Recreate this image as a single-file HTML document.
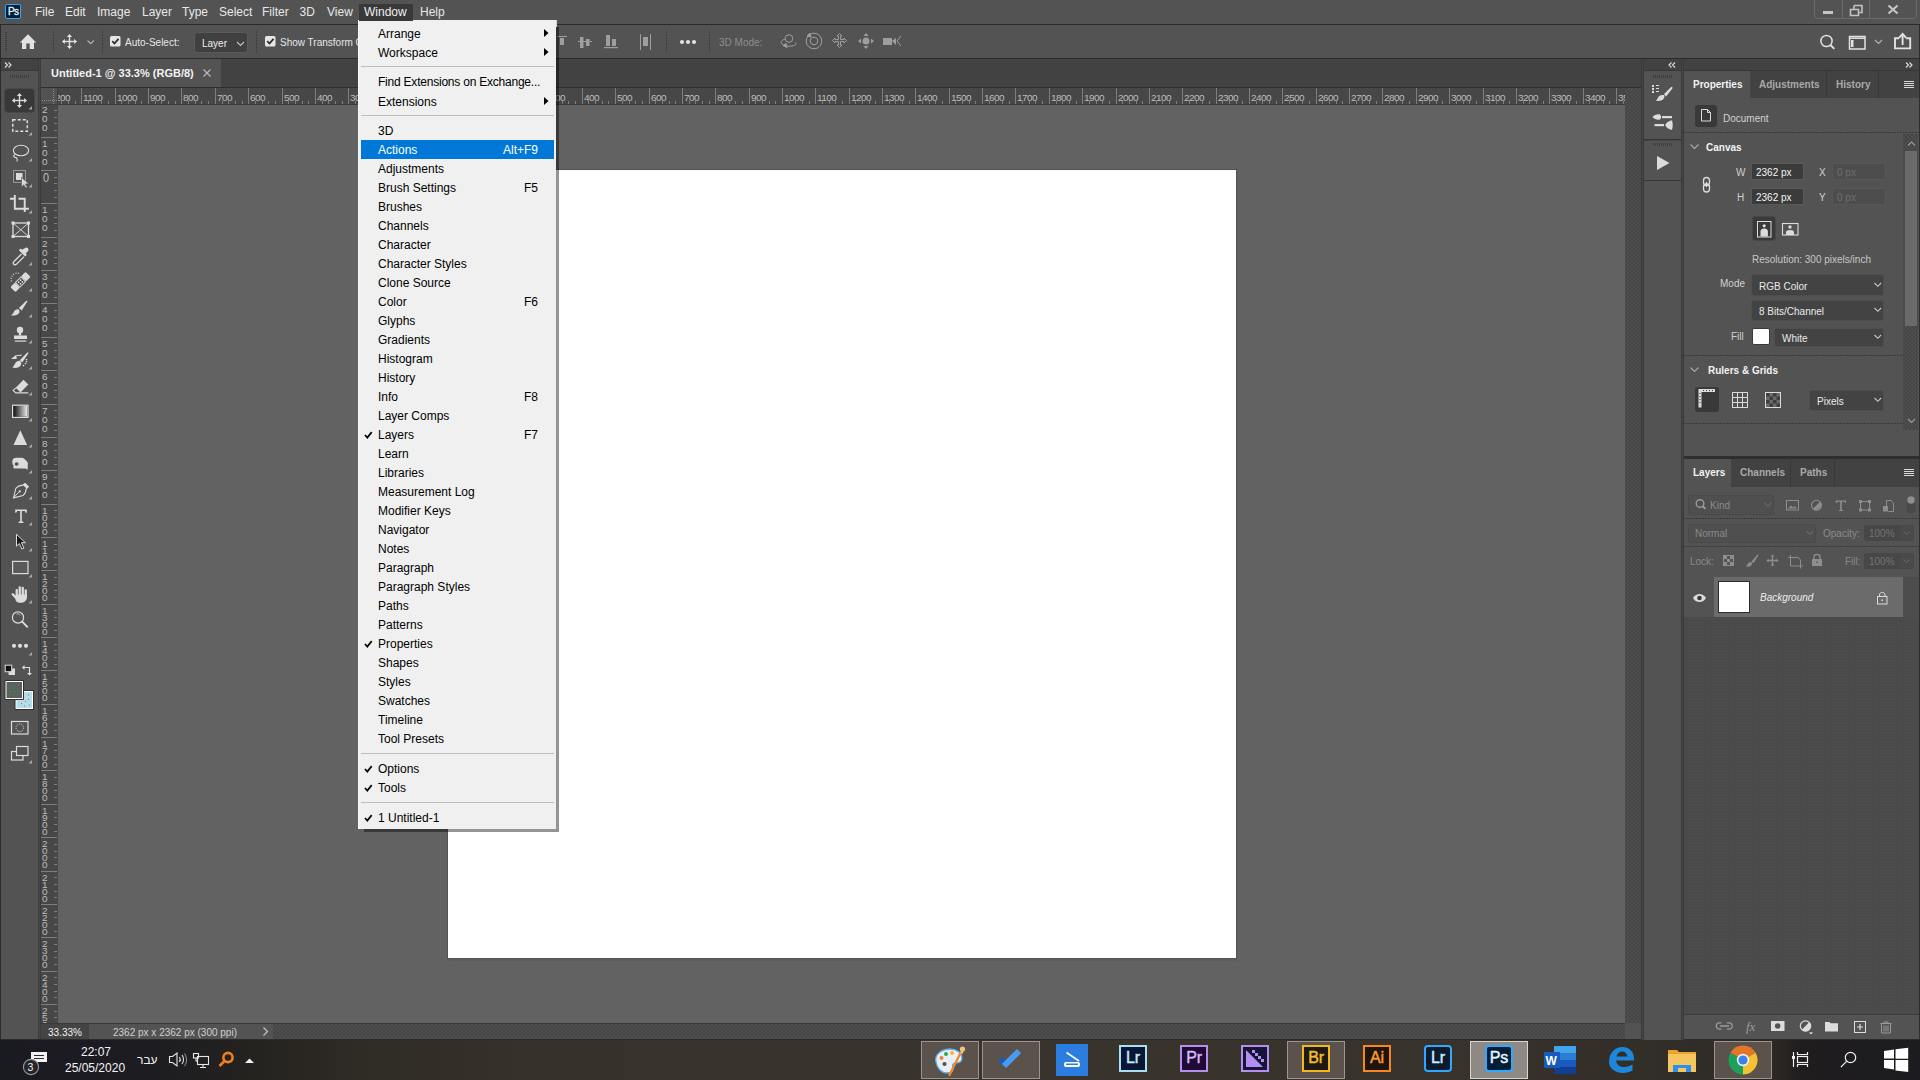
<!DOCTYPE html>
<html><head><meta charset="utf-8"><style>
html,body{margin:0;padding:0;}
body{width:1920px;height:1080px;overflow:hidden;position:relative;background:#535353;font-family:"Liberation Sans", sans-serif;}
div,svg{box-sizing:border-box;}
</style></head><body>
<div style="position:absolute;left:0px;top:0px;width:1920px;height:24px;background:#535353;"></div><div style="position:absolute;left:0px;top:24px;width:1920px;height:1px;background:#2b2b2b;"></div><div style="position:absolute;left:5px;top:4px;width:16px;height:15px;background:#001e36;border:1px solid #31a8ff;border-radius:2px;box-sizing:border-box"></div><div style="position:absolute;left:8px;top:7px;font-size:10px;line-height:10px;color:#e4f2ff;font-weight:normal;white-space:nowrap;letter-spacing:-0.6px;-webkit-text-stroke:0.35px #e4f2ff">Ps</div><div style="position:absolute;left:35px;top:6px;font-size:12px;line-height:12px;color:#e8e8e8;font-weight:normal;white-space:nowrap;">File</div><div style="position:absolute;left:65px;top:6px;font-size:12px;line-height:12px;color:#e8e8e8;font-weight:normal;white-space:nowrap;">Edit</div><div style="position:absolute;left:97px;top:6px;font-size:12px;line-height:12px;color:#e8e8e8;font-weight:normal;white-space:nowrap;">Image</div><div style="position:absolute;left:142px;top:6px;font-size:12px;line-height:12px;color:#e8e8e8;font-weight:normal;white-space:nowrap;">Layer</div><div style="position:absolute;left:182px;top:6px;font-size:12px;line-height:12px;color:#e8e8e8;font-weight:normal;white-space:nowrap;">Type</div><div style="position:absolute;left:219px;top:6px;font-size:12px;line-height:12px;color:#e8e8e8;font-weight:normal;white-space:nowrap;">Select</div><div style="position:absolute;left:262px;top:6px;font-size:12px;line-height:12px;color:#e8e8e8;font-weight:normal;white-space:nowrap;">Filter</div><div style="position:absolute;left:299.5px;top:6px;font-size:12px;line-height:12px;color:#e8e8e8;font-weight:normal;white-space:nowrap;">3D</div><div style="position:absolute;left:327px;top:6px;font-size:12px;line-height:12px;color:#e8e8e8;font-weight:normal;white-space:nowrap;">View</div><div style="position:absolute;left:420px;top:6px;font-size:12px;line-height:12px;color:#e8e8e8;font-weight:normal;white-space:nowrap;">Help</div><div style="position:absolute;left:359px;top:4px;width:54px;height:16px;background:#393939;"></div><div style="position:absolute;left:364px;top:6px;font-size:12px;line-height:12px;color:#f0f0f0;font-weight:normal;white-space:nowrap;">Window</div><div style="position:absolute;left:1814px;top:-3px;width:103px;height:22px;border:1px solid #6b6b6b;border-radius:4px"></div><div style="position:absolute;left:1842px;top:0px;width:1px;height:18px;background:#6b6b6b;"></div><div style="position:absolute;left:1869px;top:0px;width:1px;height:18px;background:#6b6b6b;"></div><svg style="position:absolute;left:1814px;top:0px;" width="106" height="20" viewBox="1814 0 106 20"><rect x="1823" y="11" width="10" height="3" fill="#c4c4c4"/><path d="M1854 5.5h8v7h-2.5M1850.5 9.5h8v6h-8z M1854 5.5v3.5" fill="none" stroke="#c4c4c4" stroke-width="1.6"/><path d="M1888.5 5.5l9 8M1897.5 5.5l-9 8" stroke="#c4c4c4" stroke-width="2.2"/></svg><div style="position:absolute;left:0px;top:25px;width:1920px;height:33px;background:#535353;"></div><div style="position:absolute;left:0px;top:25px;width:1px;height:33px;background:#2b2b2b;"></div><div style="position:absolute;left:1919px;top:25px;width:1px;height:33px;background:#2b2b2b;"></div><div style="position:absolute;left:0px;top:58px;width:1920px;height:1px;background:#2b2b2b;"></div><div style="position:absolute;left:5px;top:32px;width:2px;height:19px;background-image:repeating-linear-gradient(to bottom,#3c3c3c 0 1px,transparent 1px 2px)"></div><svg style="position:absolute;left:0px;top:25px;" width="560" height="33" viewBox="0 25 560 33"><path d="M28 34.3L19.8 42.6h2.2V49h4.3v-5.6h3.4V49H34v-6.4h2.2z" fill="#e2e2e2"/><g fill="#e2e2e2"><rect x="68.8" y="36.4" width="1.4" height="10.2"/><rect x="64.4" y="40.8" width="10.2" height="1.4"/><path d="M69.5 33.9l2.6 3.0h-5.2z M69.5 49.1l2.6 -3.0h-5.2z M61.9 41.5l3.0 2.6v-5.2z M77.1 41.5l-3.0 2.6v-5.2z"/></g><path d="M87.5 40.5l3.2 3.2 3.2-3.2" fill="none" stroke="#b4b4b4" stroke-width="1.1"/><rect x="110" y="36" width="10.5" height="10.5" rx="1.5" fill="#e6e6e6"/><path d="M112.3 41.2l2.2 2.3 4-4.6" fill="none" stroke="#2a2a2a" stroke-width="1.8"/><rect x="194.5" y="32.5" width="53" height="20" rx="3" fill="#404040" stroke="#5a5a5a"/><path d="M237 42l3.5 3.5 3.5-3.5" fill="none" stroke="#c4c4c4" stroke-width="1.1"/><rect x="265" y="36" width="10.5" height="10.5" rx="1.5" fill="#e6e6e6"/><path d="M267.3 41.2l2.2 2.3 4-4.6" fill="none" stroke="#2a2a2a" stroke-width="1.8"/></svg><div style="position:absolute;left:53px;top:31px;width:1px;height:22px;background-image:repeating-linear-gradient(to bottom,#3e3e3e 0 2px,transparent 2px 3px)"></div><div style="position:absolute;left:102px;top:31px;width:1px;height:22px;background-image:repeating-linear-gradient(to bottom,#3e3e3e 0 2px,transparent 2px 3px)"></div><div style="position:absolute;left:256px;top:31px;width:1px;height:22px;background-image:repeating-linear-gradient(to bottom,#3e3e3e 0 2px,transparent 2px 3px)"></div><div style="position:absolute;left:125px;top:38px;font-size:10px;line-height:10px;color:#e6e6e6;font-weight:normal;white-space:nowrap;">Auto-Select:</div><div style="position:absolute;left:202px;top:39px;font-size:10px;line-height:10px;color:#f0f0f0;font-weight:normal;white-space:nowrap;">Layer</div><div style="position:absolute;left:280px;top:38px;font-size:10px;line-height:10px;color:#e6e6e6;font-weight:normal;white-space:nowrap;">Show Transform Controls</div><svg style="position:absolute;left:556px;top:25px;" width="360" height="33" viewBox="556 25 360 33"><g fill="#9e9e9e"><rect x="557" y="36" width="10" height="1"/><rect x="560" y="38" width="4" height="7"/><rect x="578" y="41" width="14" height="1"/><rect x="580" y="37" width="3.5" height="11"/><rect x="586" y="39" width="3.5" height="7"/><rect x="604" y="47" width="14" height="1.2"/><rect x="606" y="35" width="4" height="11"/><rect x="612" y="39" width="4" height="7"/><rect x="640" y="34" width="1" height="16"/><rect x="650" y="34" width="1" height="16"/><rect x="643" y="37" width="5" height="9"/></g><g fill="#e2e2e2"><circle cx="682" cy="42" r="2.1"/><circle cx="688" cy="42" r="2.1"/><circle cx="694" cy="42" r="2.1"/></g><g fill="none" stroke="#9e9e9e" stroke-width="1"><circle cx="789" cy="38.5" r="3.8"/><path d="M785 39c-3 1-5 3-3 5 1.5 2 6 2.5 10 2 3-.5 5-1.5 3.5-3.5"/><path d="M783 45.5l4 2-1-4z" fill="#9e9e9e"/><circle cx="814" cy="41" r="7.8"/><circle cx="814" cy="41" r="3.8"/><path d="M807 36l3-3 1 4z" fill="#9e9e9e"/><path d="M839.5 33.5l-2.5 2.5h1.5v3.5h-3.5v-1.5l-2.5 2.5 2.5 2.5v-1.5h3.5v3.5h-1.5l2.5 2.5 2.5-2.5h-1.5v-3.5h3.5v1.5l2.5-2.5-2.5-2.5v1.5h-3.5v-3.5h1.5z"/></g><g fill="#9e9e9e"><circle cx="866" cy="41" r="3.5"/><path d="M866 33l-2.5 3h5zM866 49l-2.5-3h5zM858 41l3-2.5v5zM874 41l-3-2.5v5z"/><rect x="883" y="38" width="9" height="7"/><path d="M892 41l4-3v7z"/></g><path d="M901 36l-4 5 4 5" fill="none" stroke="#9e9e9e" stroke-width="1"/></svg><div style="position:absolute;left:666px;top:31px;width:1px;height:22px;background-image:repeating-linear-gradient(to bottom,#3e3e3e 0 2px,transparent 2px 3px)"></div><div style="position:absolute;left:709px;top:31px;width:1px;height:22px;background-image:repeating-linear-gradient(to bottom,#3e3e3e 0 2px,transparent 2px 3px)"></div><div style="position:absolute;left:719px;top:38px;font-size:10px;line-height:10px;color:#8e8e8e;font-weight:normal;white-space:nowrap;">3D Mode:</div><svg style="position:absolute;left:1810px;top:25px;" width="110" height="33" viewBox="1810 25 110 33"><g fill="none" stroke="#e2e2e2" stroke-width="1.5"><circle cx="1826.5" cy="41" r="5.6"/><path d="M1830.5 45l3.8 3.8" stroke-width="1.9"/><rect x="1849.5" y="36.5" width="15.5" height="12.5"/><path d="M1849.5 38.2h15.5"/><path d="M1875 40l3.5 3.5 3.5-3.5" stroke="#b4b4b4" stroke-width="1.1"/><path d="M1899 38.2h-4v10.2h15.2v-10.2h-4M1902.6 45v-10" stroke-width="1.9"/><path d="M1899 37.8l3.6-3.8 3.6 3.8" stroke-width="1.9"/></g><g fill="#e2e2e2"><rect x="1851" y="40" width="2.5" height="7"/></g></svg><div style="position:absolute;left:0px;top:59px;width:38px;height:981px;background:#535353;"></div><div style="position:absolute;left:0px;top:59px;width:1px;height:981px;background:#2b2b2b;"></div><div style="position:absolute;left:1px;top:59px;width:37px;height:11px;background:#424242;"></div><div style="position:absolute;left:1px;top:70px;width:37px;height:1px;background:#3a3a3a;"></div><div style="position:absolute;left:38px;top:59px;width:3px;height:981px;background:#3b3b3b;"></div><div style="position:absolute;left:39px;top:59px;width:1px;height:981px;background:#474747;"></div><svg style="position:absolute;left:0px;top:59px;" width="40" height="12" viewBox="0 59 40 12"><path d="M5 62.5l2.5 2.5-2.5 2.5M8.5 62.5l2.5 2.5-2.5 2.5" fill="none" stroke="#e0e0e0" stroke-width="1.1"/></svg><div style="position:absolute;left:10px;top:75px;width:19px;height:3px;background-image:repeating-linear-gradient(to right,#3e3e3e 0 1px,transparent 1px 2px)"></div><div style="position:absolute;left:4px;top:88px;width:31px;height:25px;background:#383838;border:1px solid #484848;border-radius:4px"></div><svg style="position:absolute;left:0px;top:60px;" width="40" height="720" viewBox="0 60 40 720"><path d="M32 109.5v-3.5l-3.5 3.5z" fill="#a8a8a8"/><path d="M32 135.5v-3.5l-3.5 3.5z" fill="#a8a8a8"/><path d="M32 161.5v-3.5l-3.5 3.5z" fill="#a8a8a8"/><path d="M32 187.5v-3.5l-3.5 3.5z" fill="#a8a8a8"/><path d="M32 213.5v-3.5l-3.5 3.5z" fill="#a8a8a8"/><path d="M32 265.5v-3.5l-3.5 3.5z" fill="#a8a8a8"/><path d="M32 291.5v-3.5l-3.5 3.5z" fill="#a8a8a8"/><path d="M32 317.5v-3.5l-3.5 3.5z" fill="#a8a8a8"/><path d="M32 343.5v-3.5l-3.5 3.5z" fill="#a8a8a8"/><path d="M32 369.5v-3.5l-3.5 3.5z" fill="#a8a8a8"/><path d="M32 395.5v-3.5l-3.5 3.5z" fill="#a8a8a8"/><path d="M32 421.5v-3.5l-3.5 3.5z" fill="#a8a8a8"/><path d="M32 447.5v-3.5l-3.5 3.5z" fill="#a8a8a8"/><path d="M32 473.5v-3.5l-3.5 3.5z" fill="#a8a8a8"/><path d="M32 499.5v-3.5l-3.5 3.5z" fill="#a8a8a8"/><path d="M32 525.5v-3.5l-3.5 3.5z" fill="#a8a8a8"/><path d="M32 551.5v-3.5l-3.5 3.5z" fill="#a8a8a8"/><path d="M32 577.5v-3.5l-3.5 3.5z" fill="#a8a8a8"/><path d="M32 603.5v-3.5l-3.5 3.5z" fill="#a8a8a8"/><path d="M32 655.5v-3.5l-3.5 3.5z" fill="#a8a8a8"/><path d="M32 763.5v-3.5l-3.5 3.5z" fill="#a8a8a8"/>
<g fill="#dcdcdc"><rect x="18.8" y="95.4" width="1.4" height="10.2"/><rect x="14.4" y="99.8" width="10.2" height="1.4"/><path d="M19.5 92.9l2.6 3.0h-5.2z M19.5 108.1l2.6 -3.0h-5.2z M11.9 100.5l3.0 2.6v-5.2z M27.1 100.5l-3.0 2.6v-5.2z"/></g>
<rect x="12.8" y="119.8" width="14.5" height="11.5" fill="none" stroke="#dcdcdc" stroke-width="1.5" stroke-dasharray="3 2"/>
<g fill="none" stroke="#dcdcdc" stroke-width="1.1">
<ellipse cx="21" cy="150.5" rx="7.6" ry="5.2"/>
<path d="M15 154.5c-2 1-1.5 3 .5 3 1.5 0 2 1.5 1.5 4"/>
</g>
<rect x="13.5" y="170.5" width="12" height="12" fill="none" stroke="#dcdcdc" stroke-width="1" stroke-dasharray="1 1"/>
<rect x="16" y="173" width="6.5" height="7" fill="#dcdcdc"/>
<path d="M21.5 177.5v9.5l2.3-2.2 2 3.3 1.5-.9-1.9-3.3 3.3-.2z" fill="#dcdcdc" stroke="#535353" stroke-width=".6"/>
<path d="M10 198.8h4.8M14.8 195v13.7h14.2M18.5 198.8h6.2v13.2" fill="none" stroke="#dcdcdc" stroke-width="1.9"/>
<g fill="none" stroke="#dcdcdc" stroke-width="1.3">
<rect x="13" y="223" width="15.5" height="13.5"/></g><path d="M13 223l15.5 13.5M28.5 223L13 236.5" stroke="#dcdcdc" stroke-width=".9"/>
<g fill="#dcdcdc"><rect x="11.5" y="221.5" width="3" height="3"/><rect x="27" y="221.5" width="3" height="3"/><rect x="11.5" y="235" width="3" height="3"/><rect x="27" y="235" width="3" height="3"/></g>
<path d="M24.8 248.2c.9-.9 2.3-.9 3.1 0s.9 2.2 0 3.1l-2.2 2.2 1.2 1.2-1.8 1.8-6.2-6.2 1.8-1.8 1.2 1.2z" fill="#dcdcdc"/>
<path d="M21.5 254l-7.3 7.3c-1 1-1.1 2.3-.4 3s2 .6 3-.4l7.3-7.3" fill="none" stroke="#dcdcdc" stroke-width="1.3"/>
<g transform="translate(20.5 282) rotate(-45) scale(0.86)">
<rect x="-12.5" y="-4.2" width="7.5" height="8.4" rx="1.5" fill="#dcdcdc"/>
<rect x="5" y="-4.2" width="7.5" height="8.4" rx="1.5" fill="#dcdcdc"/>
<rect x="-4.6" y="-3.8" width="9.2" height="7.6" fill="none" stroke="#dcdcdc" stroke-width="1.1"/>
<g fill="#dcdcdc"><circle cx="-1.6" cy="-1.5" r="1"/><circle cx="1.6" cy="-1.5" r="1"/><circle cx="-1.6" cy="1.5" r="1"/><circle cx="1.6" cy="1.5" r="1"/></g>
</g>
<path d="M11.5 281.5c-1-3 0-6.5 3.5-8 2-.8 4-.5 5 0" fill="none" stroke="#dcdcdc" stroke-width="1.1" stroke-dasharray="1.1 1.4"/>
<path d="M26.3 300.8c.5-.4 1.2 0 1 .6l-5.6 9-2.8-2.4z" fill="#dcdcdc"/>
<path d="M18.3 309.3c-2.3-.2-4.1 1.3-4.8 3.3-.4 1.2-1.2 2-2.5 2.6 2.4.7 5.7.5 7.5-1.4 1.4-1.4 1.4-3.3-.2-4.5z" fill="#dcdcdc"/>
<g fill="#dcdcdc"><circle cx="20" cy="330" r="3.2"/><rect x="18.8" y="332" width="2.4" height="3.5"/><path d="M14 335.5h13v3.5h-13z"/><rect x="14.8" y="340.5" width="11.5" height="1.2"/></g>
<path d="M28.2 352.6c.3.3.3.7.1 1l-6.1 8.8-2.4-2.2 7.5-7.6c.3-.2.6-.2.9 0z" fill="#dcdcdc"/>
<path d="M19.8 360.8c-2.4-.1-4.5 1.5-5.3 3.6-.5 1.3-1.3 2.3-2.3 3.1 2.8.8 6.2.6 8.1-1.4 1.4-1.5 1.4-3.8-.5-5.3z" fill="#dcdcdc"/>
<path d="M11 358.9l5-3.9.8 3.9z" fill="#dcdcdc"/><path d="M16 355.9c1.8-.7 3.8-.8 5.6-.5" fill="none" stroke="#dcdcdc" stroke-width="1.1"/>
<g fill="#dcdcdc"><circle cx="26.5" cy="359.6" r=".8"/><circle cx="26.5" cy="361.6" r=".8"/><circle cx="25.5" cy="363.6" r=".8"/><circle cx="23.5" cy="365.6" r=".8"/></g>
<path d="M23.5 379.8l4.8 4.6-7.8 8-4.8-4.6z" fill="#dcdcdc"/>
<path d="M15.7 387.8l-2.5 2.6 2.6 2.5h12.5" fill="none" stroke="#dcdcdc" stroke-width="1.1"/>
<rect x="12.6" y="405.2" width="15.4" height="12.2" fill="none" stroke="#dcdcdc" stroke-width="1.2"/>
<defs><linearGradient id="gr" x1="0" x2="1"><stop offset="0" stop-color="#111"/><stop offset="1" stop-color="#e6e6e6"/></linearGradient></defs>
<rect x="13.5" y="406" width="13.6" height="10.6" fill="url(#gr)"/>
<path d="M20.3 430.3l6.8 14.7h-13.6z" fill="#dcdcdc"/>
<path d="M12.3 461c.3-2.2 1.8-3.2 4.2-3.2h4.6c2.6 0 5 2 6.8 5.2l-.3 6.8-2.2-1.3h-9.2c-1.7 0-2.9-.6-3.4-1.6l1.3-.9c-1.4-.8-2-2.2-1.8-5z" fill="#dcdcdc"/>
<ellipse cx="16.6" cy="464" rx="2" ry="1.7" fill="#535353"/>
<path d="M25 483.5l3.3 3.3-2.3 2.3c.3 2.5-.8 4.5-3 6.5l-9.5 2.3 2.3-9.5c2-2.2 4-3.3 6.5-3z" fill="none" stroke="#dcdcdc" stroke-width="1.1"/>
<path d="M25 483.5l3.3 3.3-1.8 1.8-3.3-3.3z" fill="#dcdcdc"/>
<path d="M13.8 497.3l5.5-5.5" stroke="#dcdcdc" stroke-width="1"/><circle cx="19.8" cy="491.3" r="1.1" fill="#dcdcdc"/>
<path d="M15.2 509.5h11.6v3.2h-1.1l-.9-1.7h-3v10.2l1.7.8v1h-5v-1l1.7-.8v-10.2h-3l-.9 1.7h-1.1z" fill="#dcdcdc"/>
<path d="M16.5 534.3v11.8l2.8-2.6 2.6 5.5 2-.9-2.5-5.4h3.9z" fill="#1a1a1a" stroke="#dcdcdc" stroke-width="1"/>
<rect x="12.6" y="561.4" width="15.4" height="12.2" fill="#5a5a5a" stroke="#dcdcdc" stroke-width="1.2"/>
<g fill="#dcdcdc"><rect x="15.6" y="589" width="2.3" height="9" rx="1.15"/><rect x="18.6" y="586.3" width="2.3" height="10" rx="1.15"/><rect x="21.6" y="586.8" width="2.3" height="10" rx="1.15"/><rect x="24.6" y="589.3" width="2.3" height="9" rx="1.15"/>
<path d="M15.6 594.5h11.3v2.8c0 3-2.4 5.4-5.4 5.4h-1.4c-2 0-3.3-.9-4.5-2.3z"/></g>
<path d="M17.5 599.5l-4.8-5.2" stroke="#dcdcdc" stroke-width="2.4" stroke-linecap="round"/>
<circle cx="18" cy="617.5" r="5.6" fill="none" stroke="#dcdcdc" stroke-width="1.2"/>
<path d="M22 621.5l5.8 5.8" stroke="#dcdcdc" stroke-width="1.8"/>
<path d="M16.5 614.2c1.5-.6 3-.2 4 1" fill="none" stroke="#dcdcdc" stroke-width=".8"/>
<g fill="#dcdcdc"><circle cx="14" cy="645.8" r="2.1"/><circle cx="20" cy="645.8" r="2.1"/><circle cx="26" cy="645.8" r="2.1"/></g>
<rect x="8.5" y="668.5" width="6.5" height="6.5" fill="#dcdcdc"/>
<rect x="5.2" y="665.2" width="6.5" height="6.5" fill="#111" stroke="#dcdcdc" stroke-width="1"/>
<path d="M23.5 667.5h6v6" fill="none" stroke="#dcdcdc" stroke-width="1.2"/>
<path d="M22 667.5l2.5-2.5v5zM29.5 675.5l-2.5-2.5h5z" fill="#dcdcdc"/>
<rect x="14.5" y="690" width="19.5" height="20" rx="1" fill="#2e2e2e"/>
<rect x="15.5" y="691" width="17.5" height="18" fill="#ffffff"/>
<rect x="16.5" y="692" width="15.5" height="16" fill="#b4dde6"/>
<g fill="#a070d0"><circle cx="28.5" cy="695" r=".7"/><circle cx="28.5" cy="699.5" r=".7"/><circle cx="25.5" cy="701.5" r=".7"/><circle cx="21.5" cy="703.5" r=".7"/><circle cx="29.5" cy="705" r=".7"/><circle cx="24.5" cy="706" r=".7"/></g>
<rect x="4.5" y="680" width="19.5" height="20" rx="1" fill="#2e2e2e"/>
<rect x="5.5" y="681" width="17.5" height="18" fill="#ffffff"/>
<rect x="6.5" y="682" width="15.5" height="16" fill="#5e5e5e"/>
<g fill="#22a04a"><circle cx="10.5" cy="685.5" r=".7"/><circle cx="14.5" cy="685.5" r=".7"/><circle cx="18.5" cy="685.5" r=".7"/><circle cx="9.5" cy="688.5" r=".7"/><circle cx="13.5" cy="688.5" r=".7"/><circle cx="17.5" cy="688.5" r=".7"/><circle cx="10.5" cy="691.5" r=".7"/><circle cx="14.5" cy="691.5" r=".7"/><circle cx="18.5" cy="691.5" r=".7"/><circle cx="9.5" cy="694.5" r=".7"/><circle cx="13.5" cy="694.5" r=".7"/><circle cx="17.5" cy="694.5" r=".7"/></g>
<rect x="11.5" y="721.5" width="16.5" height="12.5" fill="none" stroke="#dcdcdc" stroke-width="1.2"/>
<circle cx="19.8" cy="727.8" r="3.8" fill="none" stroke="#dcdcdc" stroke-width="1" stroke-dasharray="1 1.1"/>
<rect x="11.5" y="751.5" width="11.5" height="8.5" fill="none" stroke="#dcdcdc" stroke-width="1.2"/>
<rect x="16.5" y="746.5" width="11.5" height="9" fill="#535353" stroke="#dcdcdc" stroke-width="1.2"/>
</svg><div style="position:absolute;left:41px;top:59px;width:1600px;height:28px;background:#424242;"></div><div style="position:absolute;left:41px;top:59px;width:180px;height:28px;background:#535353;"></div><div style="position:absolute;left:51px;top:68px;font-size:11px;line-height:11px;color:#f2f2f2;font-weight:bold;white-space:nowrap;">Untitled-1 @ 33.3% (RGB/8)</div><svg style="position:absolute;left:200px;top:66px;" width="14" height="14" viewBox="200 66 14 14"><path d="M203.5 69.5l7 7M210.5 69.5l-7 7" stroke="#b8b8b8" stroke-width="1.2"/></svg><div style="position:absolute;left:41px;top:87px;width:1600px;height:1px;background:#2e2e2e;"></div><div style="position:absolute;left:41px;top:88px;width:17px;height:17px;background:#3e3e3e;"></div><div style="position:absolute;left:41px;top:88px;width:16px;height:16px;background:#525252;"></div><svg style="position:absolute;left:41px;top:88px;" width="17" height="17" viewBox="41 88 17 17"><g fill="#8a8a8a"><rect x="53" y="89" width="1" height="1"/><rect x="53" y="91" width="1" height="1"/><rect x="53" y="93" width="1" height="1"/><rect x="53" y="95" width="1" height="1"/><rect x="53" y="97" width="1" height="1"/><rect x="53" y="99" width="1" height="1"/><rect x="53" y="101" width="1" height="1"/><rect x="53" y="103" width="1" height="1"/><rect x="42" y="100" width="1" height="1"/><rect x="44" y="100" width="1" height="1"/><rect x="46" y="100" width="1" height="1"/><rect x="48" y="100" width="1" height="1"/><rect x="50" y="100" width="1" height="1"/><rect x="52" y="100" width="1" height="1"/><rect x="54" y="100" width="1" height="1"/><rect x="56" y="100" width="1" height="1"/></g></svg><div style="position:absolute;left:58px;top:88px;width:1567px;height:17px;background:#474747;overflow:hidden"><div style="position:absolute;left:-43px;top:0;width:1px;height:16px;background:#7e7e7e"></div><div style="position:absolute;left:-37px;top:13px;width:1px;height:3px;background:#7e7e7e"></div><div style="position:absolute;left:-30px;top:13px;width:1px;height:3px;background:#7e7e7e"></div><div style="position:absolute;left:-23px;top:13px;width:1px;height:3px;background:#7e7e7e"></div><div style="position:absolute;left:-17px;top:13px;width:1px;height:3px;background:#7e7e7e"></div><div style="position:absolute;left:-41px;top:5px;font-size:10px;line-height:10px;color:#bdbdbd;letter-spacing:-0.55px;transform:scaleY(0.95);transform-origin:0 0">1300</div><div style="position:absolute;left:-10px;top:0;width:1px;height:16px;background:#7e7e7e"></div><div style="position:absolute;left:-3px;top:13px;width:1px;height:3px;background:#7e7e7e"></div><div style="position:absolute;left:3px;top:13px;width:1px;height:3px;background:#7e7e7e"></div><div style="position:absolute;left:10px;top:13px;width:1px;height:3px;background:#7e7e7e"></div><div style="position:absolute;left:17px;top:13px;width:1px;height:3px;background:#7e7e7e"></div><div style="position:absolute;left:-8px;top:5px;font-size:10px;line-height:10px;color:#bdbdbd;letter-spacing:-0.55px;transform:scaleY(0.95);transform-origin:0 0">1200</div><div style="position:absolute;left:23px;top:0;width:1px;height:16px;background:#7e7e7e"></div><div style="position:absolute;left:30px;top:13px;width:1px;height:3px;background:#7e7e7e"></div><div style="position:absolute;left:37px;top:13px;width:1px;height:3px;background:#7e7e7e"></div><div style="position:absolute;left:43px;top:13px;width:1px;height:3px;background:#7e7e7e"></div><div style="position:absolute;left:50px;top:13px;width:1px;height:3px;background:#7e7e7e"></div><div style="position:absolute;left:25px;top:5px;font-size:10px;line-height:10px;color:#bdbdbd;letter-spacing:-0.55px;transform:scaleY(0.95);transform-origin:0 0">1100</div><div style="position:absolute;left:57px;top:0;width:1px;height:16px;background:#7e7e7e"></div><div style="position:absolute;left:63px;top:13px;width:1px;height:3px;background:#7e7e7e"></div><div style="position:absolute;left:70px;top:13px;width:1px;height:3px;background:#7e7e7e"></div><div style="position:absolute;left:77px;top:13px;width:1px;height:3px;background:#7e7e7e"></div><div style="position:absolute;left:83px;top:13px;width:1px;height:3px;background:#7e7e7e"></div><div style="position:absolute;left:59px;top:5px;font-size:10px;line-height:10px;color:#bdbdbd;letter-spacing:-0.55px;transform:scaleY(0.95);transform-origin:0 0">1000</div><div style="position:absolute;left:90px;top:0;width:1px;height:16px;background:#7e7e7e"></div><div style="position:absolute;left:97px;top:13px;width:1px;height:3px;background:#7e7e7e"></div><div style="position:absolute;left:103px;top:13px;width:1px;height:3px;background:#7e7e7e"></div><div style="position:absolute;left:110px;top:13px;width:1px;height:3px;background:#7e7e7e"></div><div style="position:absolute;left:117px;top:13px;width:1px;height:3px;background:#7e7e7e"></div><div style="position:absolute;left:92px;top:5px;font-size:10px;line-height:10px;color:#bdbdbd;letter-spacing:-0.55px;transform:scaleY(0.95);transform-origin:0 0">900</div><div style="position:absolute;left:123px;top:0;width:1px;height:16px;background:#7e7e7e"></div><div style="position:absolute;left:130px;top:13px;width:1px;height:3px;background:#7e7e7e"></div><div style="position:absolute;left:137px;top:13px;width:1px;height:3px;background:#7e7e7e"></div><div style="position:absolute;left:143px;top:13px;width:1px;height:3px;background:#7e7e7e"></div><div style="position:absolute;left:150px;top:13px;width:1px;height:3px;background:#7e7e7e"></div><div style="position:absolute;left:125px;top:5px;font-size:10px;line-height:10px;color:#bdbdbd;letter-spacing:-0.55px;transform:scaleY(0.95);transform-origin:0 0">800</div><div style="position:absolute;left:157px;top:0;width:1px;height:16px;background:#7e7e7e"></div><div style="position:absolute;left:164px;top:13px;width:1px;height:3px;background:#7e7e7e"></div><div style="position:absolute;left:170px;top:13px;width:1px;height:3px;background:#7e7e7e"></div><div style="position:absolute;left:177px;top:13px;width:1px;height:3px;background:#7e7e7e"></div><div style="position:absolute;left:184px;top:13px;width:1px;height:3px;background:#7e7e7e"></div><div style="position:absolute;left:159px;top:5px;font-size:10px;line-height:10px;color:#bdbdbd;letter-spacing:-0.55px;transform:scaleY(0.95);transform-origin:0 0">700</div><div style="position:absolute;left:190px;top:0;width:1px;height:16px;background:#7e7e7e"></div><div style="position:absolute;left:197px;top:13px;width:1px;height:3px;background:#7e7e7e"></div><div style="position:absolute;left:204px;top:13px;width:1px;height:3px;background:#7e7e7e"></div><div style="position:absolute;left:210px;top:13px;width:1px;height:3px;background:#7e7e7e"></div><div style="position:absolute;left:217px;top:13px;width:1px;height:3px;background:#7e7e7e"></div><div style="position:absolute;left:192px;top:5px;font-size:10px;line-height:10px;color:#bdbdbd;letter-spacing:-0.55px;transform:scaleY(0.95);transform-origin:0 0">600</div><div style="position:absolute;left:224px;top:0;width:1px;height:16px;background:#7e7e7e"></div><div style="position:absolute;left:230px;top:13px;width:1px;height:3px;background:#7e7e7e"></div><div style="position:absolute;left:237px;top:13px;width:1px;height:3px;background:#7e7e7e"></div><div style="position:absolute;left:244px;top:13px;width:1px;height:3px;background:#7e7e7e"></div><div style="position:absolute;left:250px;top:13px;width:1px;height:3px;background:#7e7e7e"></div><div style="position:absolute;left:226px;top:5px;font-size:10px;line-height:10px;color:#bdbdbd;letter-spacing:-0.55px;transform:scaleY(0.95);transform-origin:0 0">500</div><div style="position:absolute;left:257px;top:0;width:1px;height:16px;background:#7e7e7e"></div><div style="position:absolute;left:264px;top:13px;width:1px;height:3px;background:#7e7e7e"></div><div style="position:absolute;left:270px;top:13px;width:1px;height:3px;background:#7e7e7e"></div><div style="position:absolute;left:277px;top:13px;width:1px;height:3px;background:#7e7e7e"></div><div style="position:absolute;left:284px;top:13px;width:1px;height:3px;background:#7e7e7e"></div><div style="position:absolute;left:259px;top:5px;font-size:10px;line-height:10px;color:#bdbdbd;letter-spacing:-0.55px;transform:scaleY(0.95);transform-origin:0 0">400</div><div style="position:absolute;left:290px;top:0;width:1px;height:16px;background:#7e7e7e"></div><div style="position:absolute;left:297px;top:13px;width:1px;height:3px;background:#7e7e7e"></div><div style="position:absolute;left:304px;top:13px;width:1px;height:3px;background:#7e7e7e"></div><div style="position:absolute;left:310px;top:13px;width:1px;height:3px;background:#7e7e7e"></div><div style="position:absolute;left:317px;top:13px;width:1px;height:3px;background:#7e7e7e"></div><div style="position:absolute;left:292px;top:5px;font-size:10px;line-height:10px;color:#bdbdbd;letter-spacing:-0.55px;transform:scaleY(0.95);transform-origin:0 0">300</div><div style="position:absolute;left:324px;top:0;width:1px;height:16px;background:#7e7e7e"></div><div style="position:absolute;left:330px;top:13px;width:1px;height:3px;background:#7e7e7e"></div><div style="position:absolute;left:337px;top:13px;width:1px;height:3px;background:#7e7e7e"></div><div style="position:absolute;left:344px;top:13px;width:1px;height:3px;background:#7e7e7e"></div><div style="position:absolute;left:350px;top:13px;width:1px;height:3px;background:#7e7e7e"></div><div style="position:absolute;left:326px;top:5px;font-size:10px;line-height:10px;color:#bdbdbd;letter-spacing:-0.55px;transform:scaleY(0.95);transform-origin:0 0">200</div><div style="position:absolute;left:357px;top:0;width:1px;height:16px;background:#7e7e7e"></div><div style="position:absolute;left:364px;top:13px;width:1px;height:3px;background:#7e7e7e"></div><div style="position:absolute;left:370px;top:13px;width:1px;height:3px;background:#7e7e7e"></div><div style="position:absolute;left:377px;top:13px;width:1px;height:3px;background:#7e7e7e"></div><div style="position:absolute;left:384px;top:13px;width:1px;height:3px;background:#7e7e7e"></div><div style="position:absolute;left:359px;top:5px;font-size:10px;line-height:10px;color:#bdbdbd;letter-spacing:-0.55px;transform:scaleY(0.95);transform-origin:0 0">100</div><div style="position:absolute;left:390px;top:0;width:1px;height:16px;background:#7e7e7e"></div><div style="position:absolute;left:397px;top:13px;width:1px;height:3px;background:#7e7e7e"></div><div style="position:absolute;left:404px;top:13px;width:1px;height:3px;background:#7e7e7e"></div><div style="position:absolute;left:410px;top:13px;width:1px;height:3px;background:#7e7e7e"></div><div style="position:absolute;left:417px;top:13px;width:1px;height:3px;background:#7e7e7e"></div><div style="position:absolute;left:392px;top:5px;font-size:10px;line-height:10px;color:#bdbdbd;letter-spacing:-0.55px;transform:scaleY(0.95);transform-origin:0 0">0</div><div style="position:absolute;left:424px;top:0;width:1px;height:16px;background:#7e7e7e"></div><div style="position:absolute;left:430px;top:13px;width:1px;height:3px;background:#7e7e7e"></div><div style="position:absolute;left:437px;top:13px;width:1px;height:3px;background:#7e7e7e"></div><div style="position:absolute;left:444px;top:13px;width:1px;height:3px;background:#7e7e7e"></div><div style="position:absolute;left:450px;top:13px;width:1px;height:3px;background:#7e7e7e"></div><div style="position:absolute;left:426px;top:5px;font-size:10px;line-height:10px;color:#bdbdbd;letter-spacing:-0.55px;transform:scaleY(0.95);transform-origin:0 0">100</div><div style="position:absolute;left:457px;top:0;width:1px;height:16px;background:#7e7e7e"></div><div style="position:absolute;left:464px;top:13px;width:1px;height:3px;background:#7e7e7e"></div><div style="position:absolute;left:470px;top:13px;width:1px;height:3px;background:#7e7e7e"></div><div style="position:absolute;left:477px;top:13px;width:1px;height:3px;background:#7e7e7e"></div><div style="position:absolute;left:484px;top:13px;width:1px;height:3px;background:#7e7e7e"></div><div style="position:absolute;left:459px;top:5px;font-size:10px;line-height:10px;color:#bdbdbd;letter-spacing:-0.55px;transform:scaleY(0.95);transform-origin:0 0">200</div><div style="position:absolute;left:490px;top:0;width:1px;height:16px;background:#7e7e7e"></div><div style="position:absolute;left:497px;top:13px;width:1px;height:3px;background:#7e7e7e"></div><div style="position:absolute;left:504px;top:13px;width:1px;height:3px;background:#7e7e7e"></div><div style="position:absolute;left:510px;top:13px;width:1px;height:3px;background:#7e7e7e"></div><div style="position:absolute;left:517px;top:13px;width:1px;height:3px;background:#7e7e7e"></div><div style="position:absolute;left:492px;top:5px;font-size:10px;line-height:10px;color:#bdbdbd;letter-spacing:-0.55px;transform:scaleY(0.95);transform-origin:0 0">300</div><div style="position:absolute;left:524px;top:0;width:1px;height:16px;background:#7e7e7e"></div><div style="position:absolute;left:530px;top:13px;width:1px;height:3px;background:#7e7e7e"></div><div style="position:absolute;left:537px;top:13px;width:1px;height:3px;background:#7e7e7e"></div><div style="position:absolute;left:544px;top:13px;width:1px;height:3px;background:#7e7e7e"></div><div style="position:absolute;left:550px;top:13px;width:1px;height:3px;background:#7e7e7e"></div><div style="position:absolute;left:526px;top:5px;font-size:10px;line-height:10px;color:#bdbdbd;letter-spacing:-0.55px;transform:scaleY(0.95);transform-origin:0 0">400</div><div style="position:absolute;left:557px;top:0;width:1px;height:16px;background:#7e7e7e"></div><div style="position:absolute;left:564px;top:13px;width:1px;height:3px;background:#7e7e7e"></div><div style="position:absolute;left:571px;top:13px;width:1px;height:3px;background:#7e7e7e"></div><div style="position:absolute;left:577px;top:13px;width:1px;height:3px;background:#7e7e7e"></div><div style="position:absolute;left:584px;top:13px;width:1px;height:3px;background:#7e7e7e"></div><div style="position:absolute;left:559px;top:5px;font-size:10px;line-height:10px;color:#bdbdbd;letter-spacing:-0.55px;transform:scaleY(0.95);transform-origin:0 0">500</div><div style="position:absolute;left:591px;top:0;width:1px;height:16px;background:#7e7e7e"></div><div style="position:absolute;left:597px;top:13px;width:1px;height:3px;background:#7e7e7e"></div><div style="position:absolute;left:604px;top:13px;width:1px;height:3px;background:#7e7e7e"></div><div style="position:absolute;left:611px;top:13px;width:1px;height:3px;background:#7e7e7e"></div><div style="position:absolute;left:617px;top:13px;width:1px;height:3px;background:#7e7e7e"></div><div style="position:absolute;left:593px;top:5px;font-size:10px;line-height:10px;color:#bdbdbd;letter-spacing:-0.55px;transform:scaleY(0.95);transform-origin:0 0">600</div><div style="position:absolute;left:624px;top:0;width:1px;height:16px;background:#7e7e7e"></div><div style="position:absolute;left:631px;top:13px;width:1px;height:3px;background:#7e7e7e"></div><div style="position:absolute;left:637px;top:13px;width:1px;height:3px;background:#7e7e7e"></div><div style="position:absolute;left:644px;top:13px;width:1px;height:3px;background:#7e7e7e"></div><div style="position:absolute;left:651px;top:13px;width:1px;height:3px;background:#7e7e7e"></div><div style="position:absolute;left:626px;top:5px;font-size:10px;line-height:10px;color:#bdbdbd;letter-spacing:-0.55px;transform:scaleY(0.95);transform-origin:0 0">700</div><div style="position:absolute;left:657px;top:0;width:1px;height:16px;background:#7e7e7e"></div><div style="position:absolute;left:664px;top:13px;width:1px;height:3px;background:#7e7e7e"></div><div style="position:absolute;left:671px;top:13px;width:1px;height:3px;background:#7e7e7e"></div><div style="position:absolute;left:677px;top:13px;width:1px;height:3px;background:#7e7e7e"></div><div style="position:absolute;left:684px;top:13px;width:1px;height:3px;background:#7e7e7e"></div><div style="position:absolute;left:659px;top:5px;font-size:10px;line-height:10px;color:#bdbdbd;letter-spacing:-0.55px;transform:scaleY(0.95);transform-origin:0 0">800</div><div style="position:absolute;left:691px;top:0;width:1px;height:16px;background:#7e7e7e"></div><div style="position:absolute;left:697px;top:13px;width:1px;height:3px;background:#7e7e7e"></div><div style="position:absolute;left:704px;top:13px;width:1px;height:3px;background:#7e7e7e"></div><div style="position:absolute;left:711px;top:13px;width:1px;height:3px;background:#7e7e7e"></div><div style="position:absolute;left:717px;top:13px;width:1px;height:3px;background:#7e7e7e"></div><div style="position:absolute;left:693px;top:5px;font-size:10px;line-height:10px;color:#bdbdbd;letter-spacing:-0.55px;transform:scaleY(0.95);transform-origin:0 0">900</div><div style="position:absolute;left:724px;top:0;width:1px;height:16px;background:#7e7e7e"></div><div style="position:absolute;left:731px;top:13px;width:1px;height:3px;background:#7e7e7e"></div><div style="position:absolute;left:737px;top:13px;width:1px;height:3px;background:#7e7e7e"></div><div style="position:absolute;left:744px;top:13px;width:1px;height:3px;background:#7e7e7e"></div><div style="position:absolute;left:751px;top:13px;width:1px;height:3px;background:#7e7e7e"></div><div style="position:absolute;left:726px;top:5px;font-size:10px;line-height:10px;color:#bdbdbd;letter-spacing:-0.55px;transform:scaleY(0.95);transform-origin:0 0">1000</div><div style="position:absolute;left:757px;top:0;width:1px;height:16px;background:#7e7e7e"></div><div style="position:absolute;left:764px;top:13px;width:1px;height:3px;background:#7e7e7e"></div><div style="position:absolute;left:771px;top:13px;width:1px;height:3px;background:#7e7e7e"></div><div style="position:absolute;left:777px;top:13px;width:1px;height:3px;background:#7e7e7e"></div><div style="position:absolute;left:784px;top:13px;width:1px;height:3px;background:#7e7e7e"></div><div style="position:absolute;left:759px;top:5px;font-size:10px;line-height:10px;color:#bdbdbd;letter-spacing:-0.55px;transform:scaleY(0.95);transform-origin:0 0">1100</div><div style="position:absolute;left:791px;top:0;width:1px;height:16px;background:#7e7e7e"></div><div style="position:absolute;left:797px;top:13px;width:1px;height:3px;background:#7e7e7e"></div><div style="position:absolute;left:804px;top:13px;width:1px;height:3px;background:#7e7e7e"></div><div style="position:absolute;left:811px;top:13px;width:1px;height:3px;background:#7e7e7e"></div><div style="position:absolute;left:817px;top:13px;width:1px;height:3px;background:#7e7e7e"></div><div style="position:absolute;left:793px;top:5px;font-size:10px;line-height:10px;color:#bdbdbd;letter-spacing:-0.55px;transform:scaleY(0.95);transform-origin:0 0">1200</div><div style="position:absolute;left:824px;top:0;width:1px;height:16px;background:#7e7e7e"></div><div style="position:absolute;left:831px;top:13px;width:1px;height:3px;background:#7e7e7e"></div><div style="position:absolute;left:837px;top:13px;width:1px;height:3px;background:#7e7e7e"></div><div style="position:absolute;left:844px;top:13px;width:1px;height:3px;background:#7e7e7e"></div><div style="position:absolute;left:851px;top:13px;width:1px;height:3px;background:#7e7e7e"></div><div style="position:absolute;left:826px;top:5px;font-size:10px;line-height:10px;color:#bdbdbd;letter-spacing:-0.55px;transform:scaleY(0.95);transform-origin:0 0">1300</div><div style="position:absolute;left:857px;top:0;width:1px;height:16px;background:#7e7e7e"></div><div style="position:absolute;left:864px;top:13px;width:1px;height:3px;background:#7e7e7e"></div><div style="position:absolute;left:871px;top:13px;width:1px;height:3px;background:#7e7e7e"></div><div style="position:absolute;left:877px;top:13px;width:1px;height:3px;background:#7e7e7e"></div><div style="position:absolute;left:884px;top:13px;width:1px;height:3px;background:#7e7e7e"></div><div style="position:absolute;left:859px;top:5px;font-size:10px;line-height:10px;color:#bdbdbd;letter-spacing:-0.55px;transform:scaleY(0.95);transform-origin:0 0">1400</div><div style="position:absolute;left:891px;top:0;width:1px;height:16px;background:#7e7e7e"></div><div style="position:absolute;left:897px;top:13px;width:1px;height:3px;background:#7e7e7e"></div><div style="position:absolute;left:904px;top:13px;width:1px;height:3px;background:#7e7e7e"></div><div style="position:absolute;left:911px;top:13px;width:1px;height:3px;background:#7e7e7e"></div><div style="position:absolute;left:917px;top:13px;width:1px;height:3px;background:#7e7e7e"></div><div style="position:absolute;left:893px;top:5px;font-size:10px;line-height:10px;color:#bdbdbd;letter-spacing:-0.55px;transform:scaleY(0.95);transform-origin:0 0">1500</div><div style="position:absolute;left:924px;top:0;width:1px;height:16px;background:#7e7e7e"></div><div style="position:absolute;left:931px;top:13px;width:1px;height:3px;background:#7e7e7e"></div><div style="position:absolute;left:937px;top:13px;width:1px;height:3px;background:#7e7e7e"></div><div style="position:absolute;left:944px;top:13px;width:1px;height:3px;background:#7e7e7e"></div><div style="position:absolute;left:951px;top:13px;width:1px;height:3px;background:#7e7e7e"></div><div style="position:absolute;left:926px;top:5px;font-size:10px;line-height:10px;color:#bdbdbd;letter-spacing:-0.55px;transform:scaleY(0.95);transform-origin:0 0">1600</div><div style="position:absolute;left:957px;top:0;width:1px;height:16px;background:#7e7e7e"></div><div style="position:absolute;left:964px;top:13px;width:1px;height:3px;background:#7e7e7e"></div><div style="position:absolute;left:971px;top:13px;width:1px;height:3px;background:#7e7e7e"></div><div style="position:absolute;left:977px;top:13px;width:1px;height:3px;background:#7e7e7e"></div><div style="position:absolute;left:984px;top:13px;width:1px;height:3px;background:#7e7e7e"></div><div style="position:absolute;left:959px;top:5px;font-size:10px;line-height:10px;color:#bdbdbd;letter-spacing:-0.55px;transform:scaleY(0.95);transform-origin:0 0">1700</div><div style="position:absolute;left:991px;top:0;width:1px;height:16px;background:#7e7e7e"></div><div style="position:absolute;left:998px;top:13px;width:1px;height:3px;background:#7e7e7e"></div><div style="position:absolute;left:1004px;top:13px;width:1px;height:3px;background:#7e7e7e"></div><div style="position:absolute;left:1011px;top:13px;width:1px;height:3px;background:#7e7e7e"></div><div style="position:absolute;left:1018px;top:13px;width:1px;height:3px;background:#7e7e7e"></div><div style="position:absolute;left:993px;top:5px;font-size:10px;line-height:10px;color:#bdbdbd;letter-spacing:-0.55px;transform:scaleY(0.95);transform-origin:0 0">1800</div><div style="position:absolute;left:1024px;top:0;width:1px;height:16px;background:#7e7e7e"></div><div style="position:absolute;left:1031px;top:13px;width:1px;height:3px;background:#7e7e7e"></div><div style="position:absolute;left:1038px;top:13px;width:1px;height:3px;background:#7e7e7e"></div><div style="position:absolute;left:1044px;top:13px;width:1px;height:3px;background:#7e7e7e"></div><div style="position:absolute;left:1051px;top:13px;width:1px;height:3px;background:#7e7e7e"></div><div style="position:absolute;left:1026px;top:5px;font-size:10px;line-height:10px;color:#bdbdbd;letter-spacing:-0.55px;transform:scaleY(0.95);transform-origin:0 0">1900</div><div style="position:absolute;left:1058px;top:0;width:1px;height:16px;background:#7e7e7e"></div><div style="position:absolute;left:1064px;top:13px;width:1px;height:3px;background:#7e7e7e"></div><div style="position:absolute;left:1071px;top:13px;width:1px;height:3px;background:#7e7e7e"></div><div style="position:absolute;left:1078px;top:13px;width:1px;height:3px;background:#7e7e7e"></div><div style="position:absolute;left:1084px;top:13px;width:1px;height:3px;background:#7e7e7e"></div><div style="position:absolute;left:1060px;top:5px;font-size:10px;line-height:10px;color:#bdbdbd;letter-spacing:-0.55px;transform:scaleY(0.95);transform-origin:0 0">2000</div><div style="position:absolute;left:1091px;top:0;width:1px;height:16px;background:#7e7e7e"></div><div style="position:absolute;left:1098px;top:13px;width:1px;height:3px;background:#7e7e7e"></div><div style="position:absolute;left:1104px;top:13px;width:1px;height:3px;background:#7e7e7e"></div><div style="position:absolute;left:1111px;top:13px;width:1px;height:3px;background:#7e7e7e"></div><div style="position:absolute;left:1118px;top:13px;width:1px;height:3px;background:#7e7e7e"></div><div style="position:absolute;left:1093px;top:5px;font-size:10px;line-height:10px;color:#bdbdbd;letter-spacing:-0.55px;transform:scaleY(0.95);transform-origin:0 0">2100</div><div style="position:absolute;left:1124px;top:0;width:1px;height:16px;background:#7e7e7e"></div><div style="position:absolute;left:1131px;top:13px;width:1px;height:3px;background:#7e7e7e"></div><div style="position:absolute;left:1138px;top:13px;width:1px;height:3px;background:#7e7e7e"></div><div style="position:absolute;left:1144px;top:13px;width:1px;height:3px;background:#7e7e7e"></div><div style="position:absolute;left:1151px;top:13px;width:1px;height:3px;background:#7e7e7e"></div><div style="position:absolute;left:1126px;top:5px;font-size:10px;line-height:10px;color:#bdbdbd;letter-spacing:-0.55px;transform:scaleY(0.95);transform-origin:0 0">2200</div><div style="position:absolute;left:1158px;top:0;width:1px;height:16px;background:#7e7e7e"></div><div style="position:absolute;left:1164px;top:13px;width:1px;height:3px;background:#7e7e7e"></div><div style="position:absolute;left:1171px;top:13px;width:1px;height:3px;background:#7e7e7e"></div><div style="position:absolute;left:1178px;top:13px;width:1px;height:3px;background:#7e7e7e"></div><div style="position:absolute;left:1184px;top:13px;width:1px;height:3px;background:#7e7e7e"></div><div style="position:absolute;left:1160px;top:5px;font-size:10px;line-height:10px;color:#bdbdbd;letter-spacing:-0.55px;transform:scaleY(0.95);transform-origin:0 0">2300</div><div style="position:absolute;left:1191px;top:0;width:1px;height:16px;background:#7e7e7e"></div><div style="position:absolute;left:1198px;top:13px;width:1px;height:3px;background:#7e7e7e"></div><div style="position:absolute;left:1204px;top:13px;width:1px;height:3px;background:#7e7e7e"></div><div style="position:absolute;left:1211px;top:13px;width:1px;height:3px;background:#7e7e7e"></div><div style="position:absolute;left:1218px;top:13px;width:1px;height:3px;background:#7e7e7e"></div><div style="position:absolute;left:1193px;top:5px;font-size:10px;line-height:10px;color:#bdbdbd;letter-spacing:-0.55px;transform:scaleY(0.95);transform-origin:0 0">2400</div><div style="position:absolute;left:1224px;top:0;width:1px;height:16px;background:#7e7e7e"></div><div style="position:absolute;left:1231px;top:13px;width:1px;height:3px;background:#7e7e7e"></div><div style="position:absolute;left:1238px;top:13px;width:1px;height:3px;background:#7e7e7e"></div><div style="position:absolute;left:1244px;top:13px;width:1px;height:3px;background:#7e7e7e"></div><div style="position:absolute;left:1251px;top:13px;width:1px;height:3px;background:#7e7e7e"></div><div style="position:absolute;left:1226px;top:5px;font-size:10px;line-height:10px;color:#bdbdbd;letter-spacing:-0.55px;transform:scaleY(0.95);transform-origin:0 0">2500</div><div style="position:absolute;left:1258px;top:0;width:1px;height:16px;background:#7e7e7e"></div><div style="position:absolute;left:1264px;top:13px;width:1px;height:3px;background:#7e7e7e"></div><div style="position:absolute;left:1271px;top:13px;width:1px;height:3px;background:#7e7e7e"></div><div style="position:absolute;left:1278px;top:13px;width:1px;height:3px;background:#7e7e7e"></div><div style="position:absolute;left:1284px;top:13px;width:1px;height:3px;background:#7e7e7e"></div><div style="position:absolute;left:1260px;top:5px;font-size:10px;line-height:10px;color:#bdbdbd;letter-spacing:-0.55px;transform:scaleY(0.95);transform-origin:0 0">2600</div><div style="position:absolute;left:1291px;top:0;width:1px;height:16px;background:#7e7e7e"></div><div style="position:absolute;left:1298px;top:13px;width:1px;height:3px;background:#7e7e7e"></div><div style="position:absolute;left:1304px;top:13px;width:1px;height:3px;background:#7e7e7e"></div><div style="position:absolute;left:1311px;top:13px;width:1px;height:3px;background:#7e7e7e"></div><div style="position:absolute;left:1318px;top:13px;width:1px;height:3px;background:#7e7e7e"></div><div style="position:absolute;left:1293px;top:5px;font-size:10px;line-height:10px;color:#bdbdbd;letter-spacing:-0.55px;transform:scaleY(0.95);transform-origin:0 0">2700</div><div style="position:absolute;left:1324px;top:0;width:1px;height:16px;background:#7e7e7e"></div><div style="position:absolute;left:1331px;top:13px;width:1px;height:3px;background:#7e7e7e"></div><div style="position:absolute;left:1338px;top:13px;width:1px;height:3px;background:#7e7e7e"></div><div style="position:absolute;left:1344px;top:13px;width:1px;height:3px;background:#7e7e7e"></div><div style="position:absolute;left:1351px;top:13px;width:1px;height:3px;background:#7e7e7e"></div><div style="position:absolute;left:1326px;top:5px;font-size:10px;line-height:10px;color:#bdbdbd;letter-spacing:-0.55px;transform:scaleY(0.95);transform-origin:0 0">2800</div><div style="position:absolute;left:1358px;top:0;width:1px;height:16px;background:#7e7e7e"></div><div style="position:absolute;left:1364px;top:13px;width:1px;height:3px;background:#7e7e7e"></div><div style="position:absolute;left:1371px;top:13px;width:1px;height:3px;background:#7e7e7e"></div><div style="position:absolute;left:1378px;top:13px;width:1px;height:3px;background:#7e7e7e"></div><div style="position:absolute;left:1384px;top:13px;width:1px;height:3px;background:#7e7e7e"></div><div style="position:absolute;left:1360px;top:5px;font-size:10px;line-height:10px;color:#bdbdbd;letter-spacing:-0.55px;transform:scaleY(0.95);transform-origin:0 0">2900</div><div style="position:absolute;left:1391px;top:0;width:1px;height:16px;background:#7e7e7e"></div><div style="position:absolute;left:1398px;top:13px;width:1px;height:3px;background:#7e7e7e"></div><div style="position:absolute;left:1405px;top:13px;width:1px;height:3px;background:#7e7e7e"></div><div style="position:absolute;left:1411px;top:13px;width:1px;height:3px;background:#7e7e7e"></div><div style="position:absolute;left:1418px;top:13px;width:1px;height:3px;background:#7e7e7e"></div><div style="position:absolute;left:1393px;top:5px;font-size:10px;line-height:10px;color:#bdbdbd;letter-spacing:-0.55px;transform:scaleY(0.95);transform-origin:0 0">3000</div><div style="position:absolute;left:1425px;top:0;width:1px;height:16px;background:#7e7e7e"></div><div style="position:absolute;left:1431px;top:13px;width:1px;height:3px;background:#7e7e7e"></div><div style="position:absolute;left:1438px;top:13px;width:1px;height:3px;background:#7e7e7e"></div><div style="position:absolute;left:1445px;top:13px;width:1px;height:3px;background:#7e7e7e"></div><div style="position:absolute;left:1451px;top:13px;width:1px;height:3px;background:#7e7e7e"></div><div style="position:absolute;left:1427px;top:5px;font-size:10px;line-height:10px;color:#bdbdbd;letter-spacing:-0.55px;transform:scaleY(0.95);transform-origin:0 0">3100</div><div style="position:absolute;left:1458px;top:0;width:1px;height:16px;background:#7e7e7e"></div><div style="position:absolute;left:1465px;top:13px;width:1px;height:3px;background:#7e7e7e"></div><div style="position:absolute;left:1471px;top:13px;width:1px;height:3px;background:#7e7e7e"></div><div style="position:absolute;left:1478px;top:13px;width:1px;height:3px;background:#7e7e7e"></div><div style="position:absolute;left:1485px;top:13px;width:1px;height:3px;background:#7e7e7e"></div><div style="position:absolute;left:1460px;top:5px;font-size:10px;line-height:10px;color:#bdbdbd;letter-spacing:-0.55px;transform:scaleY(0.95);transform-origin:0 0">3200</div><div style="position:absolute;left:1491px;top:0;width:1px;height:16px;background:#7e7e7e"></div><div style="position:absolute;left:1498px;top:13px;width:1px;height:3px;background:#7e7e7e"></div><div style="position:absolute;left:1505px;top:13px;width:1px;height:3px;background:#7e7e7e"></div><div style="position:absolute;left:1511px;top:13px;width:1px;height:3px;background:#7e7e7e"></div><div style="position:absolute;left:1518px;top:13px;width:1px;height:3px;background:#7e7e7e"></div><div style="position:absolute;left:1493px;top:5px;font-size:10px;line-height:10px;color:#bdbdbd;letter-spacing:-0.55px;transform:scaleY(0.95);transform-origin:0 0">3300</div><div style="position:absolute;left:1525px;top:0;width:1px;height:16px;background:#7e7e7e"></div><div style="position:absolute;left:1531px;top:13px;width:1px;height:3px;background:#7e7e7e"></div><div style="position:absolute;left:1538px;top:13px;width:1px;height:3px;background:#7e7e7e"></div><div style="position:absolute;left:1545px;top:13px;width:1px;height:3px;background:#7e7e7e"></div><div style="position:absolute;left:1551px;top:13px;width:1px;height:3px;background:#7e7e7e"></div><div style="position:absolute;left:1527px;top:5px;font-size:10px;line-height:10px;color:#bdbdbd;letter-spacing:-0.55px;transform:scaleY(0.95);transform-origin:0 0">3400</div><div style="position:absolute;left:1558px;top:0;width:1px;height:16px;background:#7e7e7e"></div><div style="position:absolute;left:1565px;top:13px;width:1px;height:3px;background:#7e7e7e"></div><div style="position:absolute;left:1571px;top:13px;width:1px;height:3px;background:#7e7e7e"></div><div style="position:absolute;left:1578px;top:13px;width:1px;height:3px;background:#7e7e7e"></div><div style="position:absolute;left:1585px;top:13px;width:1px;height:3px;background:#7e7e7e"></div><div style="position:absolute;left:1560px;top:5px;font-size:10px;line-height:10px;color:#bdbdbd;letter-spacing:-0.55px;transform:scaleY(0.95);transform-origin:0 0">3500</div><div style="position:absolute;left:1591px;top:0;width:1px;height:16px;background:#7e7e7e"></div><div style="position:absolute;left:1598px;top:13px;width:1px;height:3px;background:#7e7e7e"></div><div style="position:absolute;left:1605px;top:13px;width:1px;height:3px;background:#7e7e7e"></div><div style="position:absolute;left:1611px;top:13px;width:1px;height:3px;background:#7e7e7e"></div><div style="position:absolute;left:1618px;top:13px;width:1px;height:3px;background:#7e7e7e"></div><div style="position:absolute;left:1593px;top:5px;font-size:10px;line-height:10px;color:#bdbdbd;letter-spacing:-0.55px;transform:scaleY(0.95);transform-origin:0 0">3600</div><div style="position:absolute;left:0;top:16px;width:1567px;height:1px;background:#3c3c3c"></div></div><div style="position:absolute;left:41px;top:105px;width:17px;height:918px;background:#474747;overflow:hidden"><div style="position:absolute;left:0;top:-2px;width:16px;height:1px;background:#7e7e7e"></div><div style="position:absolute;left:13px;top:5px;width:3px;height:1px;background:#7e7e7e"></div><div style="position:absolute;left:13px;top:12px;width:3px;height:1px;background:#7e7e7e"></div><div style="position:absolute;left:13px;top:18px;width:3px;height:1px;background:#7e7e7e"></div><div style="position:absolute;left:13px;top:25px;width:3px;height:1px;background:#7e7e7e"></div><div style="position:absolute;left:1px;top:0.5px;font-size:10px;line-height:10px;color:#bdbdbd;transform:scaleY(0.92);transform-origin:0 0">2</div><div style="position:absolute;left:1px;top:9.5px;font-size:10px;line-height:10px;color:#bdbdbd;transform:scaleY(0.92);transform-origin:0 0">0</div><div style="position:absolute;left:1px;top:18.5px;font-size:10px;line-height:10px;color:#bdbdbd;transform:scaleY(0.92);transform-origin:0 0">0</div><div style="position:absolute;left:0;top:32px;width:16px;height:1px;background:#7e7e7e"></div><div style="position:absolute;left:13px;top:38px;width:3px;height:1px;background:#7e7e7e"></div><div style="position:absolute;left:13px;top:45px;width:3px;height:1px;background:#7e7e7e"></div><div style="position:absolute;left:13px;top:52px;width:3px;height:1px;background:#7e7e7e"></div><div style="position:absolute;left:13px;top:58px;width:3px;height:1px;background:#7e7e7e"></div><div style="position:absolute;left:1px;top:34.5px;font-size:10px;line-height:10px;color:#bdbdbd;transform:scaleY(0.92);transform-origin:0 0">1</div><div style="position:absolute;left:1px;top:43.5px;font-size:10px;line-height:10px;color:#bdbdbd;transform:scaleY(0.92);transform-origin:0 0">0</div><div style="position:absolute;left:1px;top:52.5px;font-size:10px;line-height:10px;color:#bdbdbd;transform:scaleY(0.92);transform-origin:0 0">0</div><div style="position:absolute;left:0;top:65px;width:16px;height:1px;background:#7e7e7e"></div><div style="position:absolute;left:13px;top:72px;width:3px;height:1px;background:#7e7e7e"></div><div style="position:absolute;left:13px;top:78px;width:3px;height:1px;background:#7e7e7e"></div><div style="position:absolute;left:13px;top:85px;width:3px;height:1px;background:#7e7e7e"></div><div style="position:absolute;left:13px;top:92px;width:3px;height:1px;background:#7e7e7e"></div><div style="position:absolute;left:1.5px;top:67px;font-size:12px;line-height:12px;color:#bdbdbd;transform:scaleX(0.9);transform-origin:0 0">0</div><div style="position:absolute;left:0;top:98px;width:16px;height:1px;background:#7e7e7e"></div><div style="position:absolute;left:13px;top:105px;width:3px;height:1px;background:#7e7e7e"></div><div style="position:absolute;left:13px;top:112px;width:3px;height:1px;background:#7e7e7e"></div><div style="position:absolute;left:13px;top:118px;width:3px;height:1px;background:#7e7e7e"></div><div style="position:absolute;left:13px;top:125px;width:3px;height:1px;background:#7e7e7e"></div><div style="position:absolute;left:1px;top:100.5px;font-size:10px;line-height:10px;color:#bdbdbd;transform:scaleY(0.92);transform-origin:0 0">1</div><div style="position:absolute;left:1px;top:109.5px;font-size:10px;line-height:10px;color:#bdbdbd;transform:scaleY(0.92);transform-origin:0 0">0</div><div style="position:absolute;left:1px;top:118.5px;font-size:10px;line-height:10px;color:#bdbdbd;transform:scaleY(0.92);transform-origin:0 0">0</div><div style="position:absolute;left:0;top:132px;width:16px;height:1px;background:#7e7e7e"></div><div style="position:absolute;left:13px;top:138px;width:3px;height:1px;background:#7e7e7e"></div><div style="position:absolute;left:13px;top:145px;width:3px;height:1px;background:#7e7e7e"></div><div style="position:absolute;left:13px;top:152px;width:3px;height:1px;background:#7e7e7e"></div><div style="position:absolute;left:13px;top:158px;width:3px;height:1px;background:#7e7e7e"></div><div style="position:absolute;left:1px;top:134.5px;font-size:10px;line-height:10px;color:#bdbdbd;transform:scaleY(0.92);transform-origin:0 0">2</div><div style="position:absolute;left:1px;top:143.5px;font-size:10px;line-height:10px;color:#bdbdbd;transform:scaleY(0.92);transform-origin:0 0">0</div><div style="position:absolute;left:1px;top:152.5px;font-size:10px;line-height:10px;color:#bdbdbd;transform:scaleY(0.92);transform-origin:0 0">0</div><div style="position:absolute;left:0;top:165px;width:16px;height:1px;background:#7e7e7e"></div><div style="position:absolute;left:13px;top:172px;width:3px;height:1px;background:#7e7e7e"></div><div style="position:absolute;left:13px;top:178px;width:3px;height:1px;background:#7e7e7e"></div><div style="position:absolute;left:13px;top:185px;width:3px;height:1px;background:#7e7e7e"></div><div style="position:absolute;left:13px;top:192px;width:3px;height:1px;background:#7e7e7e"></div><div style="position:absolute;left:1px;top:167.5px;font-size:10px;line-height:10px;color:#bdbdbd;transform:scaleY(0.92);transform-origin:0 0">3</div><div style="position:absolute;left:1px;top:176.5px;font-size:10px;line-height:10px;color:#bdbdbd;transform:scaleY(0.92);transform-origin:0 0">0</div><div style="position:absolute;left:1px;top:185.5px;font-size:10px;line-height:10px;color:#bdbdbd;transform:scaleY(0.92);transform-origin:0 0">0</div><div style="position:absolute;left:0;top:198px;width:16px;height:1px;background:#7e7e7e"></div><div style="position:absolute;left:13px;top:205px;width:3px;height:1px;background:#7e7e7e"></div><div style="position:absolute;left:13px;top:212px;width:3px;height:1px;background:#7e7e7e"></div><div style="position:absolute;left:13px;top:218px;width:3px;height:1px;background:#7e7e7e"></div><div style="position:absolute;left:13px;top:225px;width:3px;height:1px;background:#7e7e7e"></div><div style="position:absolute;left:1px;top:200.5px;font-size:10px;line-height:10px;color:#bdbdbd;transform:scaleY(0.92);transform-origin:0 0">4</div><div style="position:absolute;left:1px;top:209.5px;font-size:10px;line-height:10px;color:#bdbdbd;transform:scaleY(0.92);transform-origin:0 0">0</div><div style="position:absolute;left:1px;top:218.5px;font-size:10px;line-height:10px;color:#bdbdbd;transform:scaleY(0.92);transform-origin:0 0">0</div><div style="position:absolute;left:0;top:232px;width:16px;height:1px;background:#7e7e7e"></div><div style="position:absolute;left:13px;top:238px;width:3px;height:1px;background:#7e7e7e"></div><div style="position:absolute;left:13px;top:245px;width:3px;height:1px;background:#7e7e7e"></div><div style="position:absolute;left:13px;top:252px;width:3px;height:1px;background:#7e7e7e"></div><div style="position:absolute;left:13px;top:258px;width:3px;height:1px;background:#7e7e7e"></div><div style="position:absolute;left:1px;top:234.5px;font-size:10px;line-height:10px;color:#bdbdbd;transform:scaleY(0.92);transform-origin:0 0">5</div><div style="position:absolute;left:1px;top:243.5px;font-size:10px;line-height:10px;color:#bdbdbd;transform:scaleY(0.92);transform-origin:0 0">0</div><div style="position:absolute;left:1px;top:252.5px;font-size:10px;line-height:10px;color:#bdbdbd;transform:scaleY(0.92);transform-origin:0 0">0</div><div style="position:absolute;left:0;top:265px;width:16px;height:1px;background:#7e7e7e"></div><div style="position:absolute;left:13px;top:272px;width:3px;height:1px;background:#7e7e7e"></div><div style="position:absolute;left:13px;top:279px;width:3px;height:1px;background:#7e7e7e"></div><div style="position:absolute;left:13px;top:285px;width:3px;height:1px;background:#7e7e7e"></div><div style="position:absolute;left:13px;top:292px;width:3px;height:1px;background:#7e7e7e"></div><div style="position:absolute;left:1px;top:267.5px;font-size:10px;line-height:10px;color:#bdbdbd;transform:scaleY(0.92);transform-origin:0 0">6</div><div style="position:absolute;left:1px;top:276.5px;font-size:10px;line-height:10px;color:#bdbdbd;transform:scaleY(0.92);transform-origin:0 0">0</div><div style="position:absolute;left:1px;top:285.5px;font-size:10px;line-height:10px;color:#bdbdbd;transform:scaleY(0.92);transform-origin:0 0">0</div><div style="position:absolute;left:0;top:299px;width:16px;height:1px;background:#7e7e7e"></div><div style="position:absolute;left:13px;top:305px;width:3px;height:1px;background:#7e7e7e"></div><div style="position:absolute;left:13px;top:312px;width:3px;height:1px;background:#7e7e7e"></div><div style="position:absolute;left:13px;top:319px;width:3px;height:1px;background:#7e7e7e"></div><div style="position:absolute;left:13px;top:325px;width:3px;height:1px;background:#7e7e7e"></div><div style="position:absolute;left:1px;top:301.5px;font-size:10px;line-height:10px;color:#bdbdbd;transform:scaleY(0.92);transform-origin:0 0">7</div><div style="position:absolute;left:1px;top:310.5px;font-size:10px;line-height:10px;color:#bdbdbd;transform:scaleY(0.92);transform-origin:0 0">0</div><div style="position:absolute;left:1px;top:319.5px;font-size:10px;line-height:10px;color:#bdbdbd;transform:scaleY(0.92);transform-origin:0 0">0</div><div style="position:absolute;left:0;top:332px;width:16px;height:1px;background:#7e7e7e"></div><div style="position:absolute;left:13px;top:339px;width:3px;height:1px;background:#7e7e7e"></div><div style="position:absolute;left:13px;top:345px;width:3px;height:1px;background:#7e7e7e"></div><div style="position:absolute;left:13px;top:352px;width:3px;height:1px;background:#7e7e7e"></div><div style="position:absolute;left:13px;top:359px;width:3px;height:1px;background:#7e7e7e"></div><div style="position:absolute;left:1px;top:334.5px;font-size:10px;line-height:10px;color:#bdbdbd;transform:scaleY(0.92);transform-origin:0 0">8</div><div style="position:absolute;left:1px;top:343.5px;font-size:10px;line-height:10px;color:#bdbdbd;transform:scaleY(0.92);transform-origin:0 0">0</div><div style="position:absolute;left:1px;top:352.5px;font-size:10px;line-height:10px;color:#bdbdbd;transform:scaleY(0.92);transform-origin:0 0">0</div><div style="position:absolute;left:0;top:365px;width:16px;height:1px;background:#7e7e7e"></div><div style="position:absolute;left:13px;top:372px;width:3px;height:1px;background:#7e7e7e"></div><div style="position:absolute;left:13px;top:379px;width:3px;height:1px;background:#7e7e7e"></div><div style="position:absolute;left:13px;top:385px;width:3px;height:1px;background:#7e7e7e"></div><div style="position:absolute;left:13px;top:392px;width:3px;height:1px;background:#7e7e7e"></div><div style="position:absolute;left:1px;top:367.5px;font-size:10px;line-height:10px;color:#bdbdbd;transform:scaleY(0.92);transform-origin:0 0">9</div><div style="position:absolute;left:1px;top:376.5px;font-size:10px;line-height:10px;color:#bdbdbd;transform:scaleY(0.92);transform-origin:0 0">0</div><div style="position:absolute;left:1px;top:385.5px;font-size:10px;line-height:10px;color:#bdbdbd;transform:scaleY(0.92);transform-origin:0 0">0</div><div style="position:absolute;left:0;top:399px;width:16px;height:1px;background:#7e7e7e"></div><div style="position:absolute;left:13px;top:405px;width:3px;height:1px;background:#7e7e7e"></div><div style="position:absolute;left:13px;top:412px;width:3px;height:1px;background:#7e7e7e"></div><div style="position:absolute;left:13px;top:419px;width:3px;height:1px;background:#7e7e7e"></div><div style="position:absolute;left:13px;top:425px;width:3px;height:1px;background:#7e7e7e"></div><div style="position:absolute;left:1px;top:401.5px;font-size:10px;line-height:10px;color:#bdbdbd;transform:scaleY(0.92);transform-origin:0 0">1</div><div style="position:absolute;left:1px;top:408.5px;font-size:10px;line-height:10px;color:#bdbdbd;transform:scaleY(0.92);transform-origin:0 0">0</div><div style="position:absolute;left:1px;top:415.5px;font-size:10px;line-height:10px;color:#bdbdbd;transform:scaleY(0.92);transform-origin:0 0">0</div><div style="position:absolute;left:1px;top:422.5px;font-size:10px;line-height:10px;color:#bdbdbd;transform:scaleY(0.92);transform-origin:0 0">0</div><div style="position:absolute;left:0;top:432px;width:16px;height:1px;background:#7e7e7e"></div><div style="position:absolute;left:13px;top:439px;width:3px;height:1px;background:#7e7e7e"></div><div style="position:absolute;left:13px;top:445px;width:3px;height:1px;background:#7e7e7e"></div><div style="position:absolute;left:13px;top:452px;width:3px;height:1px;background:#7e7e7e"></div><div style="position:absolute;left:13px;top:459px;width:3px;height:1px;background:#7e7e7e"></div><div style="position:absolute;left:1px;top:434.5px;font-size:10px;line-height:10px;color:#bdbdbd;transform:scaleY(0.92);transform-origin:0 0">1</div><div style="position:absolute;left:1px;top:441.5px;font-size:10px;line-height:10px;color:#bdbdbd;transform:scaleY(0.92);transform-origin:0 0">1</div><div style="position:absolute;left:1px;top:448.5px;font-size:10px;line-height:10px;color:#bdbdbd;transform:scaleY(0.92);transform-origin:0 0">0</div><div style="position:absolute;left:1px;top:455.5px;font-size:10px;line-height:10px;color:#bdbdbd;transform:scaleY(0.92);transform-origin:0 0">0</div><div style="position:absolute;left:0;top:465px;width:16px;height:1px;background:#7e7e7e"></div><div style="position:absolute;left:13px;top:472px;width:3px;height:1px;background:#7e7e7e"></div><div style="position:absolute;left:13px;top:479px;width:3px;height:1px;background:#7e7e7e"></div><div style="position:absolute;left:13px;top:485px;width:3px;height:1px;background:#7e7e7e"></div><div style="position:absolute;left:13px;top:492px;width:3px;height:1px;background:#7e7e7e"></div><div style="position:absolute;left:1px;top:467.5px;font-size:10px;line-height:10px;color:#bdbdbd;transform:scaleY(0.92);transform-origin:0 0">1</div><div style="position:absolute;left:1px;top:474.5px;font-size:10px;line-height:10px;color:#bdbdbd;transform:scaleY(0.92);transform-origin:0 0">2</div><div style="position:absolute;left:1px;top:481.5px;font-size:10px;line-height:10px;color:#bdbdbd;transform:scaleY(0.92);transform-origin:0 0">0</div><div style="position:absolute;left:1px;top:488.5px;font-size:10px;line-height:10px;color:#bdbdbd;transform:scaleY(0.92);transform-origin:0 0">0</div><div style="position:absolute;left:0;top:499px;width:16px;height:1px;background:#7e7e7e"></div><div style="position:absolute;left:13px;top:505px;width:3px;height:1px;background:#7e7e7e"></div><div style="position:absolute;left:13px;top:512px;width:3px;height:1px;background:#7e7e7e"></div><div style="position:absolute;left:13px;top:519px;width:3px;height:1px;background:#7e7e7e"></div><div style="position:absolute;left:13px;top:525px;width:3px;height:1px;background:#7e7e7e"></div><div style="position:absolute;left:1px;top:501.5px;font-size:10px;line-height:10px;color:#bdbdbd;transform:scaleY(0.92);transform-origin:0 0">1</div><div style="position:absolute;left:1px;top:508.5px;font-size:10px;line-height:10px;color:#bdbdbd;transform:scaleY(0.92);transform-origin:0 0">3</div><div style="position:absolute;left:1px;top:515.5px;font-size:10px;line-height:10px;color:#bdbdbd;transform:scaleY(0.92);transform-origin:0 0">0</div><div style="position:absolute;left:1px;top:522.5px;font-size:10px;line-height:10px;color:#bdbdbd;transform:scaleY(0.92);transform-origin:0 0">0</div><div style="position:absolute;left:0;top:532px;width:16px;height:1px;background:#7e7e7e"></div><div style="position:absolute;left:13px;top:539px;width:3px;height:1px;background:#7e7e7e"></div><div style="position:absolute;left:13px;top:545px;width:3px;height:1px;background:#7e7e7e"></div><div style="position:absolute;left:13px;top:552px;width:3px;height:1px;background:#7e7e7e"></div><div style="position:absolute;left:13px;top:559px;width:3px;height:1px;background:#7e7e7e"></div><div style="position:absolute;left:1px;top:534.5px;font-size:10px;line-height:10px;color:#bdbdbd;transform:scaleY(0.92);transform-origin:0 0">1</div><div style="position:absolute;left:1px;top:541.5px;font-size:10px;line-height:10px;color:#bdbdbd;transform:scaleY(0.92);transform-origin:0 0">4</div><div style="position:absolute;left:1px;top:548.5px;font-size:10px;line-height:10px;color:#bdbdbd;transform:scaleY(0.92);transform-origin:0 0">0</div><div style="position:absolute;left:1px;top:555.5px;font-size:10px;line-height:10px;color:#bdbdbd;transform:scaleY(0.92);transform-origin:0 0">0</div><div style="position:absolute;left:0;top:565px;width:16px;height:1px;background:#7e7e7e"></div><div style="position:absolute;left:13px;top:572px;width:3px;height:1px;background:#7e7e7e"></div><div style="position:absolute;left:13px;top:579px;width:3px;height:1px;background:#7e7e7e"></div><div style="position:absolute;left:13px;top:585px;width:3px;height:1px;background:#7e7e7e"></div><div style="position:absolute;left:13px;top:592px;width:3px;height:1px;background:#7e7e7e"></div><div style="position:absolute;left:1px;top:567.5px;font-size:10px;line-height:10px;color:#bdbdbd;transform:scaleY(0.92);transform-origin:0 0">1</div><div style="position:absolute;left:1px;top:574.5px;font-size:10px;line-height:10px;color:#bdbdbd;transform:scaleY(0.92);transform-origin:0 0">5</div><div style="position:absolute;left:1px;top:581.5px;font-size:10px;line-height:10px;color:#bdbdbd;transform:scaleY(0.92);transform-origin:0 0">0</div><div style="position:absolute;left:1px;top:588.5px;font-size:10px;line-height:10px;color:#bdbdbd;transform:scaleY(0.92);transform-origin:0 0">0</div><div style="position:absolute;left:0;top:599px;width:16px;height:1px;background:#7e7e7e"></div><div style="position:absolute;left:13px;top:605px;width:3px;height:1px;background:#7e7e7e"></div><div style="position:absolute;left:13px;top:612px;width:3px;height:1px;background:#7e7e7e"></div><div style="position:absolute;left:13px;top:619px;width:3px;height:1px;background:#7e7e7e"></div><div style="position:absolute;left:13px;top:625px;width:3px;height:1px;background:#7e7e7e"></div><div style="position:absolute;left:1px;top:601.5px;font-size:10px;line-height:10px;color:#bdbdbd;transform:scaleY(0.92);transform-origin:0 0">1</div><div style="position:absolute;left:1px;top:608.5px;font-size:10px;line-height:10px;color:#bdbdbd;transform:scaleY(0.92);transform-origin:0 0">6</div><div style="position:absolute;left:1px;top:615.5px;font-size:10px;line-height:10px;color:#bdbdbd;transform:scaleY(0.92);transform-origin:0 0">0</div><div style="position:absolute;left:1px;top:622.5px;font-size:10px;line-height:10px;color:#bdbdbd;transform:scaleY(0.92);transform-origin:0 0">0</div><div style="position:absolute;left:0;top:632px;width:16px;height:1px;background:#7e7e7e"></div><div style="position:absolute;left:13px;top:639px;width:3px;height:1px;background:#7e7e7e"></div><div style="position:absolute;left:13px;top:645px;width:3px;height:1px;background:#7e7e7e"></div><div style="position:absolute;left:13px;top:652px;width:3px;height:1px;background:#7e7e7e"></div><div style="position:absolute;left:13px;top:659px;width:3px;height:1px;background:#7e7e7e"></div><div style="position:absolute;left:1px;top:634.5px;font-size:10px;line-height:10px;color:#bdbdbd;transform:scaleY(0.92);transform-origin:0 0">1</div><div style="position:absolute;left:1px;top:641.5px;font-size:10px;line-height:10px;color:#bdbdbd;transform:scaleY(0.92);transform-origin:0 0">7</div><div style="position:absolute;left:1px;top:648.5px;font-size:10px;line-height:10px;color:#bdbdbd;transform:scaleY(0.92);transform-origin:0 0">0</div><div style="position:absolute;left:1px;top:655.5px;font-size:10px;line-height:10px;color:#bdbdbd;transform:scaleY(0.92);transform-origin:0 0">0</div><div style="position:absolute;left:0;top:665px;width:16px;height:1px;background:#7e7e7e"></div><div style="position:absolute;left:13px;top:672px;width:3px;height:1px;background:#7e7e7e"></div><div style="position:absolute;left:13px;top:679px;width:3px;height:1px;background:#7e7e7e"></div><div style="position:absolute;left:13px;top:685px;width:3px;height:1px;background:#7e7e7e"></div><div style="position:absolute;left:13px;top:692px;width:3px;height:1px;background:#7e7e7e"></div><div style="position:absolute;left:1px;top:667.5px;font-size:10px;line-height:10px;color:#bdbdbd;transform:scaleY(0.92);transform-origin:0 0">1</div><div style="position:absolute;left:1px;top:674.5px;font-size:10px;line-height:10px;color:#bdbdbd;transform:scaleY(0.92);transform-origin:0 0">8</div><div style="position:absolute;left:1px;top:681.5px;font-size:10px;line-height:10px;color:#bdbdbd;transform:scaleY(0.92);transform-origin:0 0">0</div><div style="position:absolute;left:1px;top:688.5px;font-size:10px;line-height:10px;color:#bdbdbd;transform:scaleY(0.92);transform-origin:0 0">0</div><div style="position:absolute;left:0;top:699px;width:16px;height:1px;background:#7e7e7e"></div><div style="position:absolute;left:13px;top:706px;width:3px;height:1px;background:#7e7e7e"></div><div style="position:absolute;left:13px;top:712px;width:3px;height:1px;background:#7e7e7e"></div><div style="position:absolute;left:13px;top:719px;width:3px;height:1px;background:#7e7e7e"></div><div style="position:absolute;left:13px;top:726px;width:3px;height:1px;background:#7e7e7e"></div><div style="position:absolute;left:1px;top:701.5px;font-size:10px;line-height:10px;color:#bdbdbd;transform:scaleY(0.92);transform-origin:0 0">1</div><div style="position:absolute;left:1px;top:708.5px;font-size:10px;line-height:10px;color:#bdbdbd;transform:scaleY(0.92);transform-origin:0 0">9</div><div style="position:absolute;left:1px;top:715.5px;font-size:10px;line-height:10px;color:#bdbdbd;transform:scaleY(0.92);transform-origin:0 0">0</div><div style="position:absolute;left:1px;top:722.5px;font-size:10px;line-height:10px;color:#bdbdbd;transform:scaleY(0.92);transform-origin:0 0">0</div><div style="position:absolute;left:0;top:732px;width:16px;height:1px;background:#7e7e7e"></div><div style="position:absolute;left:13px;top:739px;width:3px;height:1px;background:#7e7e7e"></div><div style="position:absolute;left:13px;top:746px;width:3px;height:1px;background:#7e7e7e"></div><div style="position:absolute;left:13px;top:752px;width:3px;height:1px;background:#7e7e7e"></div><div style="position:absolute;left:13px;top:759px;width:3px;height:1px;background:#7e7e7e"></div><div style="position:absolute;left:1px;top:734.5px;font-size:10px;line-height:10px;color:#bdbdbd;transform:scaleY(0.92);transform-origin:0 0">2</div><div style="position:absolute;left:1px;top:741.5px;font-size:10px;line-height:10px;color:#bdbdbd;transform:scaleY(0.92);transform-origin:0 0">0</div><div style="position:absolute;left:1px;top:748.5px;font-size:10px;line-height:10px;color:#bdbdbd;transform:scaleY(0.92);transform-origin:0 0">0</div><div style="position:absolute;left:1px;top:755.5px;font-size:10px;line-height:10px;color:#bdbdbd;transform:scaleY(0.92);transform-origin:0 0">0</div><div style="position:absolute;left:0;top:766px;width:16px;height:1px;background:#7e7e7e"></div><div style="position:absolute;left:13px;top:772px;width:3px;height:1px;background:#7e7e7e"></div><div style="position:absolute;left:13px;top:779px;width:3px;height:1px;background:#7e7e7e"></div><div style="position:absolute;left:13px;top:786px;width:3px;height:1px;background:#7e7e7e"></div><div style="position:absolute;left:13px;top:792px;width:3px;height:1px;background:#7e7e7e"></div><div style="position:absolute;left:1px;top:768.5px;font-size:10px;line-height:10px;color:#bdbdbd;transform:scaleY(0.92);transform-origin:0 0">2</div><div style="position:absolute;left:1px;top:775.5px;font-size:10px;line-height:10px;color:#bdbdbd;transform:scaleY(0.92);transform-origin:0 0">1</div><div style="position:absolute;left:1px;top:782.5px;font-size:10px;line-height:10px;color:#bdbdbd;transform:scaleY(0.92);transform-origin:0 0">0</div><div style="position:absolute;left:1px;top:789.5px;font-size:10px;line-height:10px;color:#bdbdbd;transform:scaleY(0.92);transform-origin:0 0">0</div><div style="position:absolute;left:0;top:799px;width:16px;height:1px;background:#7e7e7e"></div><div style="position:absolute;left:13px;top:806px;width:3px;height:1px;background:#7e7e7e"></div><div style="position:absolute;left:13px;top:812px;width:3px;height:1px;background:#7e7e7e"></div><div style="position:absolute;left:13px;top:819px;width:3px;height:1px;background:#7e7e7e"></div><div style="position:absolute;left:13px;top:826px;width:3px;height:1px;background:#7e7e7e"></div><div style="position:absolute;left:1px;top:801.5px;font-size:10px;line-height:10px;color:#bdbdbd;transform:scaleY(0.92);transform-origin:0 0">2</div><div style="position:absolute;left:1px;top:808.5px;font-size:10px;line-height:10px;color:#bdbdbd;transform:scaleY(0.92);transform-origin:0 0">2</div><div style="position:absolute;left:1px;top:815.5px;font-size:10px;line-height:10px;color:#bdbdbd;transform:scaleY(0.92);transform-origin:0 0">0</div><div style="position:absolute;left:1px;top:822.5px;font-size:10px;line-height:10px;color:#bdbdbd;transform:scaleY(0.92);transform-origin:0 0">0</div><div style="position:absolute;left:0;top:832px;width:16px;height:1px;background:#7e7e7e"></div><div style="position:absolute;left:13px;top:839px;width:3px;height:1px;background:#7e7e7e"></div><div style="position:absolute;left:13px;top:846px;width:3px;height:1px;background:#7e7e7e"></div><div style="position:absolute;left:13px;top:852px;width:3px;height:1px;background:#7e7e7e"></div><div style="position:absolute;left:13px;top:859px;width:3px;height:1px;background:#7e7e7e"></div><div style="position:absolute;left:1px;top:834.5px;font-size:10px;line-height:10px;color:#bdbdbd;transform:scaleY(0.92);transform-origin:0 0">2</div><div style="position:absolute;left:1px;top:841.5px;font-size:10px;line-height:10px;color:#bdbdbd;transform:scaleY(0.92);transform-origin:0 0">3</div><div style="position:absolute;left:1px;top:848.5px;font-size:10px;line-height:10px;color:#bdbdbd;transform:scaleY(0.92);transform-origin:0 0">0</div><div style="position:absolute;left:1px;top:855.5px;font-size:10px;line-height:10px;color:#bdbdbd;transform:scaleY(0.92);transform-origin:0 0">0</div><div style="position:absolute;left:0;top:866px;width:16px;height:1px;background:#7e7e7e"></div><div style="position:absolute;left:13px;top:872px;width:3px;height:1px;background:#7e7e7e"></div><div style="position:absolute;left:13px;top:879px;width:3px;height:1px;background:#7e7e7e"></div><div style="position:absolute;left:13px;top:886px;width:3px;height:1px;background:#7e7e7e"></div><div style="position:absolute;left:13px;top:892px;width:3px;height:1px;background:#7e7e7e"></div><div style="position:absolute;left:1px;top:868.5px;font-size:10px;line-height:10px;color:#bdbdbd;transform:scaleY(0.92);transform-origin:0 0">2</div><div style="position:absolute;left:1px;top:875.5px;font-size:10px;line-height:10px;color:#bdbdbd;transform:scaleY(0.92);transform-origin:0 0">4</div><div style="position:absolute;left:1px;top:882.5px;font-size:10px;line-height:10px;color:#bdbdbd;transform:scaleY(0.92);transform-origin:0 0">0</div><div style="position:absolute;left:1px;top:889.5px;font-size:10px;line-height:10px;color:#bdbdbd;transform:scaleY(0.92);transform-origin:0 0">0</div><div style="position:absolute;left:0;top:899px;width:16px;height:1px;background:#7e7e7e"></div><div style="position:absolute;left:13px;top:906px;width:3px;height:1px;background:#7e7e7e"></div><div style="position:absolute;left:13px;top:912px;width:3px;height:1px;background:#7e7e7e"></div><div style="position:absolute;left:13px;top:919px;width:3px;height:1px;background:#7e7e7e"></div><div style="position:absolute;left:13px;top:926px;width:3px;height:1px;background:#7e7e7e"></div><div style="position:absolute;left:1px;top:901.5px;font-size:10px;line-height:10px;color:#bdbdbd;transform:scaleY(0.92);transform-origin:0 0">2</div><div style="position:absolute;left:1px;top:908.5px;font-size:10px;line-height:10px;color:#bdbdbd;transform:scaleY(0.92);transform-origin:0 0">5</div><div style="position:absolute;left:1px;top:915.5px;font-size:10px;line-height:10px;color:#bdbdbd;transform:scaleY(0.92);transform-origin:0 0">0</div><div style="position:absolute;left:1px;top:922.5px;font-size:10px;line-height:10px;color:#bdbdbd;transform:scaleY(0.92);transform-origin:0 0">0</div><div style="position:absolute;left:0;top:932px;width:16px;height:1px;background:#7e7e7e"></div><div style="position:absolute;left:13px;top:939px;width:3px;height:1px;background:#7e7e7e"></div><div style="position:absolute;left:13px;top:946px;width:3px;height:1px;background:#7e7e7e"></div><div style="position:absolute;left:13px;top:952px;width:3px;height:1px;background:#7e7e7e"></div><div style="position:absolute;left:13px;top:959px;width:3px;height:1px;background:#7e7e7e"></div><div style="position:absolute;left:1px;top:934.5px;font-size:10px;line-height:10px;color:#bdbdbd;transform:scaleY(0.92);transform-origin:0 0">2</div><div style="position:absolute;left:1px;top:941.5px;font-size:10px;line-height:10px;color:#bdbdbd;transform:scaleY(0.92);transform-origin:0 0">6</div><div style="position:absolute;left:1px;top:948.5px;font-size:10px;line-height:10px;color:#bdbdbd;transform:scaleY(0.92);transform-origin:0 0">0</div><div style="position:absolute;left:1px;top:955.5px;font-size:10px;line-height:10px;color:#bdbdbd;transform:scaleY(0.92);transform-origin:0 0">0</div><div style="position:absolute;left:0;top:966px;width:16px;height:1px;background:#7e7e7e"></div><div style="position:absolute;left:13px;top:972px;width:3px;height:1px;background:#7e7e7e"></div><div style="position:absolute;left:13px;top:979px;width:3px;height:1px;background:#7e7e7e"></div><div style="position:absolute;left:13px;top:986px;width:3px;height:1px;background:#7e7e7e"></div><div style="position:absolute;left:13px;top:992px;width:3px;height:1px;background:#7e7e7e"></div><div style="position:absolute;left:1px;top:968.5px;font-size:10px;line-height:10px;color:#bdbdbd;transform:scaleY(0.92);transform-origin:0 0">2</div><div style="position:absolute;left:1px;top:975.5px;font-size:10px;line-height:10px;color:#bdbdbd;transform:scaleY(0.92);transform-origin:0 0">7</div><div style="position:absolute;left:1px;top:982.5px;font-size:10px;line-height:10px;color:#bdbdbd;transform:scaleY(0.92);transform-origin:0 0">0</div><div style="position:absolute;left:1px;top:989.5px;font-size:10px;line-height:10px;color:#bdbdbd;transform:scaleY(0.92);transform-origin:0 0">0</div></div><div style="position:absolute;left:58px;top:105px;width:1567px;height:918px;background:#626262;"></div><div style="position:absolute;left:449px;top:959px;width:788px;height:2px;background:#5d5d5d;"></div><div style="position:absolute;left:447px;top:169px;width:790px;height:790px;background:#525252;"></div><div style="position:absolute;left:448px;top:170px;width:788px;height:788px;background:#ffffff;"></div><div style="position:absolute;left:1625px;top:88px;width:16px;height:935px;background-color:#464646;background-image:linear-gradient(45deg,#4e4e4e 25%,transparent 25%,transparent 75%,#4e4e4e 75%),linear-gradient(45deg,#4e4e4e 25%,transparent 25%,transparent 75%,#4e4e4e 75%);background-size:4px 4px;background-position:0 0,2px 2px"></div><div style="position:absolute;left:1625px;top:1023px;width:16px;height:16px;background:#535353;"></div><div style="position:absolute;left:41px;top:1023px;width:1584px;height:1px;background:#3a3a3a;"></div><div style="position:absolute;left:41px;top:1024px;width:48px;height:15px;background:#444444;"></div><div style="position:absolute;left:48px;top:1028px;font-size:10px;line-height:10px;color:#f0f0f0;font-weight:normal;white-space:nowrap;">33.33%</div><div style="position:absolute;left:89px;top:1024px;width:184px;height:15px;background:#535353;"></div><div style="position:absolute;left:113px;top:1028px;font-size:10px;line-height:10px;color:#d0d0d0;font-weight:normal;white-space:nowrap;">2362 px x 2362 px (300 ppi)</div><svg style="position:absolute;left:260px;top:1024px;" width="12" height="15" viewBox="260 1024 12 15"><path d="M263.5 1027.5l4 4-4 4" fill="none" stroke="#c8c8c8" stroke-width="1.1"/></svg><div style="position:absolute;left:273px;top:1024px;width:1352px;height:15px;background-color:#464646;background-image:linear-gradient(45deg,#4e4e4e 25%,transparent 25%,transparent 75%,#4e4e4e 75%),linear-gradient(45deg,#4e4e4e 25%,transparent 25%,transparent 75%,#4e4e4e 75%);background-size:4px 4px;background-position:0 0,2px 2px"></div><div style="position:absolute;left:0px;top:1039px;width:1920px;height:1px;background:#2b2b2b;"></div><div style="position:absolute;left:1641px;top:59px;width:3px;height:981px;background:#393939;"></div><div style="position:absolute;left:1642px;top:59px;width:1px;height:981px;background:#464646;"></div><div style="position:absolute;left:1644px;top:59px;width:276px;height:11px;background:#424242;"></div><div style="position:absolute;left:1644px;top:70px;width:276px;height:1px;background:#363636;"></div><svg style="position:absolute;left:1644px;top:59px;" width="276" height="12" viewBox="1644 59 276 12"><path d="M1671.5 62.5l-2.5 2.5 2.5 2.5M1675 62.5l-2.5 2.5 2.5 2.5M1906 62.5l2.5 2.5-2.5 2.5M1909.5 62.5l2.5 2.5-2.5 2.5" fill="none" stroke="#e0e0e0" stroke-width="1.1"/></svg><div style="position:absolute;left:1644px;top:71px;width:37px;height:969px;background:#535353;"></div><div style="position:absolute;left:1681px;top:59px;width:3px;height:981px;background:#393939;"></div><div style="position:absolute;left:1682px;top:59px;width:1px;height:981px;background:#464646;"></div><div style="position:absolute;left:1644px;top:139px;width:37px;height:1px;background:#333333;"></div><div style="position:absolute;left:1644px;top:140px;width:37px;height:1px;background:#474747;"></div><div style="position:absolute;left:1644px;top:180px;width:37px;height:1px;background:#363636;"></div><div style="position:absolute;left:1653px;top:75px;width:19px;height:3px;background-image:repeating-linear-gradient(to right,#3e3e3e 0 1px,transparent 1px 2px)"></div><div style="position:absolute;left:1653px;top:143px;width:19px;height:3px;background-image:repeating-linear-gradient(to right,#3e3e3e 0 1px,transparent 1px 2px)"></div><svg style="position:absolute;left:1644px;top:71px;" width="37" height="110" viewBox="1644 71 37 110"><g fill="#dcdcdc">
<rect x="1652" y="85" width="2" height="2"/><rect x="1652" y="88" width="2" height="2"/><rect x="1652" y="91" width="2" height="2"/>
<rect x="1656" y="85" width="3" height="1"/><rect x="1656" y="88" width="3" height="1"/><rect x="1656" y="91" width="3" height="1"/>
<path d="M1672.3 87.2c-.3-.4-.9-.4-1.2-.1l-7.2 7.2 2.2 2.2 6.4-8.3c.2-.3.1-.7-.2-1z"/>
<path d="M1663.2 95c-2.3-.4-4.6.9-5.4 3-.4 1.1-1.1 1.9-2.2 2.5 2.4.8 5.8.6 7.6-1.2 1.3-1.3 1.5-3 .9-4.3z"/>
<path d="M1652.5 117c1.8-2 4.3-3 6.6-2.7 1.3.2 2 1.3 2 2.7s-.7 2.5-2 2.7c-2.3.3-4.8-.7-6.6-2.7z"/><rect x="1662" y="116" width="10" height="2.2"/>
<rect x="1654.5" y="124" width="9.5" height="2.2"/><path d="M1672 120.2c-3.3.5-6 2.6-6.8 4.9.8 2.3 3.5 4.4 6.8 4.9.5-1.6.7-3.2.7-4.9s-.2-3.3-.7-4.9z"/>
<path d="M1657 156v14l12.5-7z"/>
</g></svg><div style="position:absolute;left:1684px;top:71px;width:235px;height:27px;background:#424242;"></div><div style="position:absolute;left:1684px;top:71px;width:66px;height:27px;background:#535353;"></div><div style="position:absolute;left:1826px;top:71px;width:1px;height:27px;background:#383838;"></div><div style="position:absolute;left:1878px;top:71px;width:1px;height:27px;background:#383838;"></div><div style="position:absolute;left:1693px;top:80px;font-size:10px;line-height:10px;color:#f2f2f2;font-weight:bold;white-space:nowrap;">Properties</div><div style="position:absolute;left:1759px;top:80px;font-size:10px;line-height:10px;color:#a9a9a9;font-weight:bold;white-space:nowrap;">Adjustments</div><div style="position:absolute;left:1836px;top:80px;font-size:10px;line-height:10px;color:#a9a9a9;font-weight:bold;white-space:nowrap;">History</div><svg style="position:absolute;left:1900px;top:75px;" width="20" height="20" viewBox="1900 75 20 20"><g fill="#d8d8d8"><rect x="1904" y="81" width="10" height="1"/><rect x="1904" y="83" width="10" height="1"/><rect x="1904" y="85" width="10" height="1"/><rect x="1904" y="87" width="10" height="1"/></g></svg><div style="position:absolute;left:1684px;top:98px;width:235px;height:358px;background:#535353;"></div><div style="position:absolute;left:1919px;top:59px;width:1px;height:981px;background:#2e2e2e;"></div><div style="position:absolute;left:1695px;top:105px;width:22px;height:22px;background:#393939;border-radius:3px"></div><svg style="position:absolute;left:1695px;top:105px;" width="22" height="22" viewBox="1695 105 22 22"><path d="M1701.5 109.5h6l3 3v8.5h-9z M1707.5 109.5v3h3" fill="none" stroke="#dcdcdc" stroke-width="1"/></svg><div style="position:absolute;left:1723px;top:114px;font-size:10px;line-height:10px;color:#d2d2d2;font-weight:normal;white-space:nowrap;">Document</div><div style="position:absolute;left:1684px;top:132px;width:235px;height:1px;background-image:repeating-linear-gradient(to right,#3a3a3a 0 2px,transparent 2px 3px)"></div><div style="position:absolute;left:1903px;top:134px;width:15px;height:296px;background-color:#464646;background-image:linear-gradient(45deg,#4e4e4e 25%,transparent 25%,transparent 75%,#4e4e4e 75%),linear-gradient(45deg,#4e4e4e 25%,transparent 25%,transparent 75%,#4e4e4e 75%);background-size:4px 4px;background-position:0 0,2px 2px"></div><div style="position:absolute;left:1905px;top:151px;width:12px;height:175px;background:#6a6a6a;"></div><svg style="position:absolute;left:1904px;top:134px;" width="14" height="296" viewBox="1904 134 14 296"><path d="M1908 145.5l3.5-3.5 3.5 3.5M1908 419l3.5 3.5 3.5-3.5" fill="none" stroke="#9a9a9a" stroke-width="1.1"/></svg><svg style="position:absolute;left:1684px;top:140px;" width="30" height="15" viewBox="1684 140 30 15"><path d="M1690.5 144.5l4 4 4-4" fill="none" stroke="#a8a8a8" stroke-width="1.1"/></svg><div style="position:absolute;left:1706px;top:143px;font-size:10px;line-height:10px;color:#f2f2f2;font-weight:bold;white-space:nowrap;">Canvas</div><div style="position:absolute;left:1736px;top:168px;font-size:10px;line-height:10px;color:#d0d0d0;font-weight:normal;white-space:nowrap;">W</div><div style="position:absolute;left:1737px;top:193px;font-size:10px;line-height:10px;color:#d0d0d0;font-weight:normal;white-space:nowrap;">H</div><div style="position:absolute;left:1751px;top:163px;width:53px;height:17px;border:1px solid #5a5a5a;background:#3b3b3b"></div><div style="position:absolute;left:1756px;top:168px;font-size:10px;line-height:10px;color:#f4f4f4;font-weight:normal;white-space:nowrap;">2362 px</div><div style="position:absolute;left:1751px;top:188px;width:53px;height:17px;border:1px solid #5a5a5a;background:#3b3b3b"></div><div style="position:absolute;left:1756px;top:193px;font-size:10px;line-height:10px;color:#f4f4f4;font-weight:normal;white-space:nowrap;">2362 px</div><div style="position:absolute;left:1819px;top:168px;font-size:10px;line-height:10px;color:#d0d0d0;font-weight:normal;white-space:nowrap;">X</div><div style="position:absolute;left:1819px;top:193px;font-size:10px;line-height:10px;color:#d0d0d0;font-weight:normal;white-space:nowrap;">Y</div><div style="position:absolute;left:1832px;top:163px;width:54px;height:17px;border:1px solid #575757;background:#4d4d4d"></div><div style="position:absolute;left:1837px;top:168px;font-size:10px;line-height:10px;color:#6e6e6e;font-weight:normal;white-space:nowrap;">0 px</div><div style="position:absolute;left:1832px;top:188px;width:54px;height:17px;border:1px solid #575757;background:#4d4d4d"></div><div style="position:absolute;left:1837px;top:193px;font-size:10px;line-height:10px;color:#6e6e6e;font-weight:normal;white-space:nowrap;">0 px</div><svg style="position:absolute;left:1700px;top:175px;" width="14" height="20" viewBox="1700 175 14 20"><g fill="none" stroke="#dcdcdc" stroke-width="1.3"><rect x="1703.5" y="177.5" width="6" height="8" rx="3"/><rect x="1703.5" y="184" width="6" height="8" rx="3"/></g><path d="M1706.5 182v5" stroke="#dcdcdc" stroke-width="1.3"/></svg><div style="position:absolute;left:1752px;top:216px;width:24px;height:25px;background:#393939;border:1px solid #474747;border-radius:3px"></div><svg style="position:absolute;left:1750px;top:214px;" width="52" height="30" viewBox="1750 214 52 30"><rect x="1757.5" y="221.5" width="13.5" height="15.5" fill="none" stroke="#dcdcdc" stroke-width="1"/>
<circle cx="1764.2" cy="225.8" r="1.6" fill="#dcdcdc"/><path d="M1760.5 236.5v-5c0-2 1.5-3 3.7-3s3.7 1 3.7 3v5z" fill="#dcdcdc"/>
<rect x="1782.5" y="223.5" width="15.5" height="11.5" fill="none" stroke="#dcdcdc" stroke-width="1.1"/>
<circle cx="1790" cy="227" r="1.7" fill="#dcdcdc"/><path d="M1786 235v-2.8c0-1.5 1.8-2.2 4-2.2s4 .7 4 2.2v2.8z" fill="#dcdcdc"/></svg><div style="position:absolute;left:1752px;top:255px;font-size:10px;line-height:10px;color:#c8c8c8;font-weight:normal;white-space:nowrap;">Resolution: 300 pixels/inch</div><div style="position:absolute;left:1720px;top:279px;font-size:10px;line-height:10px;color:#d0d0d0;font-weight:normal;white-space:nowrap;">Mode</div><div style="position:absolute;left:1751px;top:274px;width:133px;height:22px;border:1px solid #4e4e4e;border-radius:3px;background:#434343"></div><div style="position:absolute;left:1759px;top:282px;font-size:10px;line-height:10px;color:#eaeaea;font-weight:normal;white-space:nowrap;">RGB Color</div><svg style="position:absolute;left:1873px;top:281px;" width="10" height="8" viewBox="1873 281 10 8"><path d="M1874.5 283l3.3 3.3 3.3-3.3" fill="none" stroke="#c8c8c8" stroke-width="1.1"/></svg><div style="position:absolute;left:1751px;top:300px;width:133px;height:21px;border:1px solid #4e4e4e;border-radius:3px;background:#434343"></div><div style="position:absolute;left:1759px;top:307px;font-size:10px;line-height:10px;color:#eaeaea;font-weight:normal;white-space:nowrap;">8 Bits/Channel</div><svg style="position:absolute;left:1873px;top:306px;" width="10" height="8" viewBox="1873 306 10 8"><path d="M1874.5 308l3.3 3.3 3.3-3.3" fill="none" stroke="#c8c8c8" stroke-width="1.1"/></svg><div style="position:absolute;left:1731px;top:332px;font-size:10px;line-height:10px;color:#d0d0d0;font-weight:normal;white-space:nowrap;">Fill</div><div style="position:absolute;left:1752px;top:328px;width:18px;height:17px;background:#fff;border:1px solid #3a3a3a;border-radius:2px"></div><div style="position:absolute;left:1774px;top:328px;width:110px;height:19px;border:1px solid #4e4e4e;border-radius:3px;background:#434343"></div><div style="position:absolute;left:1782px;top:334px;font-size:10px;line-height:10px;color:#eaeaea;font-weight:normal;white-space:nowrap;">White</div><svg style="position:absolute;left:1873px;top:333px;" width="10" height="8" viewBox="1873 333 10 8"><path d="M1874.5 335l3.3 3.3 3.3-3.3" fill="none" stroke="#c8c8c8" stroke-width="1.1"/></svg><div style="position:absolute;left:1684px;top:355px;width:220px;height:1px;background-image:repeating-linear-gradient(to right,#3a3a3a 0 2px,transparent 2px 3px)"></div><svg style="position:absolute;left:1684px;top:362px;" width="30" height="15" viewBox="1684 362 30 15"><path d="M1690.5 367.5l4 4 4-4" fill="none" stroke="#a8a8a8" stroke-width="1.1"/></svg><div style="position:absolute;left:1708px;top:366px;font-size:10px;line-height:10px;color:#f2f2f2;font-weight:bold;white-space:nowrap;">Rulers &amp; Grids</div><div style="position:absolute;left:1695px;top:387px;width:24px;height:25px;background:#393939;border-radius:3px"></div><svg style="position:absolute;left:1695px;top:385px;" width="90" height="30" viewBox="1695 385 90 30"><path d="M1700 407.5v-17h15" fill="none" stroke="#dcdcdc" stroke-width="3"/>
<g fill="#393939"><rect x="1699.5" y="393" width="1" height="1"/><rect x="1699.5" y="396" width="1" height="1"/><rect x="1699.5" y="399" width="1" height="1"/><rect x="1699.5" y="402" width="1" height="1"/><rect x="1703" y="390" width="1" height="1"/><rect x="1706" y="390" width="1" height="1"/><rect x="1709" y="390" width="1" height="1"/><rect x="1712" y="390" width="1" height="1"/></g>
<g fill="none" stroke="#dcdcdc" stroke-width="1"><rect x="1732.5" y="392.5" width="15" height="15"/><path d="M1737.5 392.5v15M1742.5 392.5v15M1732.5 397.5h15M1732.5 402.5h15"/></g>
<rect x="1765.5" y="392.5" width="15" height="15" fill="#6a6a6a" stroke="#dcdcdc" stroke-width="1"/>
<g fill="#3e3e3e"><rect x="1766" y="393" width="3.5" height="3.5"/><rect x="1773" y="393" width="3.5" height="3.5"/><rect x="1769.5" y="396.5" width="3.5" height="3.5"/><rect x="1776.5" y="396.5" width="3.5" height="3.5"/><rect x="1766" y="400" width="3.5" height="3.5"/><rect x="1773" y="400" width="3.5" height="3.5"/><rect x="1769.5" y="403.5" width="3.5" height="3.5"/><rect x="1776.5" y="403.5" width="3.5" height="3.5"/></g></svg><div style="position:absolute;left:1809px;top:390px;width:75px;height:21px;border:1px solid #4e4e4e;border-radius:3px;background:#434343"></div><div style="position:absolute;left:1817px;top:397px;font-size:10px;line-height:10px;color:#eaeaea;font-weight:normal;white-space:nowrap;">Pixels</div><svg style="position:absolute;left:1873px;top:396px;" width="10" height="8" viewBox="1873 396 10 8"><path d="M1874.5 398l3.3 3.3 3.3-3.3" fill="none" stroke="#c8c8c8" stroke-width="1.1"/></svg><div style="position:absolute;left:1684px;top:423px;width:220px;height:1px;background-image:repeating-linear-gradient(to right,#3a3a3a 0 2px,transparent 2px 3px)"></div><div style="position:absolute;left:1684px;top:456px;width:235px;height:3px;background:#2e2e2e;"></div><div style="position:absolute;left:1684px;top:459px;width:235px;height:28px;background:#424242;"></div><div style="position:absolute;left:1684px;top:459px;width:47px;height:28px;background:#535353;"></div><div style="position:absolute;left:1790px;top:459px;width:1px;height:28px;background:#383838;"></div><div style="position:absolute;left:1834px;top:459px;width:1px;height:28px;background:#383838;"></div><div style="position:absolute;left:1693px;top:468px;font-size:10px;line-height:10px;color:#f2f2f2;font-weight:bold;white-space:nowrap;">Layers</div><div style="position:absolute;left:1740px;top:468px;font-size:10px;line-height:10px;color:#a9a9a9;font-weight:bold;white-space:nowrap;">Channels</div><div style="position:absolute;left:1800px;top:468px;font-size:10px;line-height:10px;color:#a9a9a9;font-weight:bold;white-space:nowrap;">Paths</div><svg style="position:absolute;left:1900px;top:463px;" width="20" height="20" viewBox="1900 463 20 20"><g fill="#d8d8d8"><rect x="1904" y="469" width="10" height="1"/><rect x="1904" y="471" width="10" height="1"/><rect x="1904" y="473" width="10" height="1"/><rect x="1904" y="475" width="10" height="1"/></g></svg><div style="position:absolute;left:1684px;top:487px;width:235px;height:130px;background:#535353;"></div><div style="position:absolute;left:1688px;top:495px;width:86px;height:20px;border:1px dotted #464646;border-radius:3px;background:#4f4f4f"></div><div style="position:absolute;left:1696px;top:502px;font-size:10px;line-height:10px;color:#eaeaea;font-weight:normal;white-space:nowrap;"></div><svg style="position:absolute;left:1763px;top:501px;" width="10" height="8" viewBox="1763 501 10 8"><path d="M1764.5 503l3.3 3.3 3.3-3.3" fill="none" stroke="#6a6a6a" stroke-width="1.1"/></svg><svg style="position:absolute;left:1688px;top:495px;" width="90" height="22" viewBox="1688 495 90 22"><circle cx="1700" cy="503.5" r="3.8" fill="none" stroke="#9a9a9a" stroke-width="1.4"/><path d="M1702.8 506.3l2.6 2.6" stroke="#9a9a9a" stroke-width="2"/></svg><div style="position:absolute;left:1710px;top:501px;font-size:10px;line-height:10px;color:#8a8a8a;font-weight:normal;white-space:nowrap;">Kind</div><svg style="position:absolute;left:1780px;top:492px;" width="140" height="26" viewBox="1780 492 140 26"><rect x="1786.5" y="500.5" width="12" height="9.5" fill="none" stroke="#8e8e8e" stroke-width="1"/><path d="M1788 508.5l3-3 2 2 1.5-1.5 2.5 2.5z" fill="#8e8e8e"/>
<circle cx="1816.5" cy="505.3" r="5" fill="none" stroke="#8e8e8e" stroke-width="1.1"/><path d="M1820 501.8a5 5 0 0 1-7 7z" fill="#8e8e8e"/>
<path d="M1835.5 500.5h10.5v2.4h-.8l-.6-1.2h-2.8v8l1.3.6v.8h-4.2v-.8l1.3-.6v-8h-2.8l-.6 1.2h-.8z" fill="#8e8e8e"/>
<rect x="1860.5" y="501.5" width="9" height="8.5" fill="none" stroke="#8e8e8e" stroke-width="1"/><g fill="#8e8e8e"><rect x="1859" y="500" width="3" height="3"/><rect x="1868" y="500" width="3" height="3"/><rect x="1859" y="508.5" width="3" height="3"/><rect x="1868" y="508.5" width="3" height="3"/></g>
<path d="M1886.5 507v-6.5h4.5l2.5 2.5v8.5h-5" fill="none" stroke="#8e8e8e" stroke-width="1"/><rect x="1883" y="506" width="5" height="5.5" fill="#8e8e8e"/>
<rect x="1907" y="497" width="8" height="16" rx="4" fill="#4a4a4a" stroke="#474747" stroke-width=".8"/><circle cx="1911" cy="500" r="3.8" fill="#8e8e8e"/></svg><div style="position:absolute;left:1684px;top:518px;width:235px;height:1px;background-image:repeating-linear-gradient(to right,#3a3a3a 0 2px,transparent 2px 3px)"></div><div style="position:absolute;left:1688px;top:524px;width:128px;height:19px;border:1px dotted #464646;border-radius:3px;background:#4f4f4f"></div><div style="position:absolute;left:1696px;top:530px;font-size:10px;line-height:10px;color:#eaeaea;font-weight:normal;white-space:nowrap;"></div><svg style="position:absolute;left:1805px;top:529px;" width="10" height="8" viewBox="1805 529 10 8"><path d="M1806.5 531l3.3 3.3 3.3-3.3" fill="none" stroke="#6a6a6a" stroke-width="1.1"/></svg><div style="position:absolute;left:1695px;top:529px;font-size:10px;line-height:10px;color:#8a8a8a;font-weight:normal;white-space:nowrap;">Normal</div><div style="position:absolute;left:1823px;top:529px;font-size:10px;line-height:10px;color:#8a8a8a;font-weight:normal;white-space:nowrap;">Opacity:</div><div style="position:absolute;left:1864px;top:525px;width:50px;height:16px;border:1px dotted #474747;border-radius:2px;background:#4a4a4a"></div><div style="position:absolute;left:1864px;top:526px;width:36px;height:14px;background:#474747;"></div><div style="position:absolute;left:1869px;top:529px;font-size:10px;line-height:10px;color:#737373;font-weight:normal;white-space:nowrap;">100%</div><svg style="position:absolute;left:1900px;top:527px;" width="14" height="12" viewBox="1900 527 14 12"><path d="M1903.5 531.5l3 3 3-3" fill="none" stroke="#6a6a6a" stroke-width="1"/></svg><div style="position:absolute;left:1684px;top:546px;width:235px;height:1px;background-image:repeating-linear-gradient(to right,#3a3a3a 0 2px,transparent 2px 3px)"></div><div style="position:absolute;left:1690px;top:557px;font-size:10px;line-height:10px;color:#8a8a8a;font-weight:normal;white-space:nowrap;">Lock:</div><svg style="position:absolute;left:1720px;top:550px;" width="110" height="22" viewBox="1720 550 110 22"><rect x="1723.5" y="555.5" width="10" height="10" fill="none" stroke="#8e8e8e"/><g fill="#8e8e8e"><rect x="1724" y="556" width="3" height="3"/><rect x="1730" y="556" width="3" height="3"/><rect x="1727" y="559" width="3" height="3"/><rect x="1724" y="562" width="3" height="3"/><rect x="1730" y="562" width="3" height="3"/></g>
<path d="M1757.5 554.5l-6 7 2 1.7 4.8-8c.2-.5-.4-1-.8-.7z" fill="#8e8e8e"/><path d="M1751 562c-1.8 0-3 1.2-3.5 2.6-.3.9-1 1.4-1.9 1.8 1.7.4 4.2.3 5.6-1 1.1-1.1 1.1-2.5-.2-3.4z" fill="#8e8e8e"/>
<path d="M1772.5 554.5l-2 2h1.3v3.3h-3.3v-1.3l-2 2 2 2v-1.3h3.3v3.3h-1.3l2 2 2-2h-1.3v-3.3h3.3v1.3l2-2-2-2v1.3h-3.3v-3.3h1.3z" fill="#8e8e8e"/>
<path d="M1790.5 557.5v8.5h10v-6l-2-2.5h-8zM1788 557.5h2.5M1790.5 555v2.5M1800.5 566v2.5M1800.5 566h2.5" fill="none" stroke="#8e8e8e" stroke-width="1"/>
<rect x="1812" y="559" width="10" height="7" fill="#8e8e8e"/><path d="M1814 559v-2c0-3.5 6-3.5 6 0v2" fill="none" stroke="#8e8e8e" stroke-width="1.3"/><rect x="1816.3" y="561.5" width="1.4" height="1.6" fill="#535353"/></svg><div style="position:absolute;left:1845px;top:557px;font-size:10px;line-height:10px;color:#8a8a8a;font-weight:normal;white-space:nowrap;">Fill:</div><div style="position:absolute;left:1864px;top:553px;width:50px;height:16px;border:1px dotted #474747;border-radius:2px;background:#4a4a4a"></div><div style="position:absolute;left:1864px;top:554px;width:36px;height:14px;background:#474747;"></div><div style="position:absolute;left:1869px;top:557px;font-size:10px;line-height:10px;color:#737373;font-weight:normal;white-space:nowrap;">100%</div><svg style="position:absolute;left:1900px;top:555px;" width="14" height="12" viewBox="1900 555 14 12"><path d="M1903.5 559.5l3 3 3-3" fill="none" stroke="#6a6a6a" stroke-width="1"/></svg><div style="position:absolute;left:1684px;top:617px;width:235px;height:398px;background:#4a4a4a;background-image:radial-gradient(#515151 0.6px, transparent 0.8px);background-size:3px 3px"></div><div style="position:absolute;left:1684px;top:577px;width:235px;height:40px;background:#4d4d4d;"></div><div style="position:absolute;left:1684px;top:577px;width:30px;height:40px;background:#535353;"></div><div style="position:absolute;left:1714px;top:577px;width:189px;height:40px;background:#6b6b6b;"></div><svg style="position:absolute;left:1690px;top:590px;" width="20" height="15" viewBox="1690 590 20 15"><path d="M1693 598c2-3 4-4 6.5-4s4.5 1 6.5 4c-2 3-4 4-6.5 4s-4.5-1-6.5-4z" fill="#dcdcdc"/><circle cx="1699.5" cy="598" r="2.3" fill="#3a3a3a"/></svg><div style="position:absolute;left:1718px;top:581px;width:32px;height:32px;background:#fff;border:1px solid #2e2a26"></div><div style="position:absolute;left:1760px;top:593px;font-size:10px;line-height:10px;color:#ececec;font-weight:normal;white-space:nowrap;font-style:italic">Background</div><svg style="position:absolute;left:1874px;top:589px;" width="18" height="18" viewBox="1874 589 18 18"><rect x="1877.5" y="596.5" width="9.5" height="7.5" fill="none" stroke="#dcdcdc" stroke-width="1"/><path d="M1879.5 596.5v-1.5c0-3.5 5.5-3.5 5.5 0v1.5" fill="none" stroke="#dcdcdc" stroke-width="1"/><rect x="1881.5" y="599.5" width="1.5" height="1.5" fill="#dcdcdc"/></svg><div style="position:absolute;left:1684px;top:1014px;width:235px;height:1px;background:#3c3c3c;"></div><div style="position:absolute;left:1684px;top:1015px;width:235px;height:24px;background:#535353;"></div><svg style="position:absolute;left:1710px;top:1015px;" width="190" height="24" viewBox="1710 1015 190 24"><g fill="none" stroke="#9a9a9a" stroke-width="1.3"><path d="M1721.5 1022.8h-2a3.2 3.2 0 0 0 0 6.4h2M1727 1022.8h2a3.2 3.2 0 0 1 0 6.4h-2M1720 1026h9"/></g>
<text x="1746" y="1031" font-family="Liberation Serif" font-style="italic" font-size="13" fill="#9a9a9a">fx</text>
<rect x="1771" y="1021" width="13.5" height="10" fill="#dcdcdc"/><circle cx="1777.7" cy="1026" r="2.8" fill="#535353"/>
<circle cx="1805.5" cy="1026" r="5.2" fill="none" stroke="#dcdcdc" stroke-width="1.2"/><path d="M1809.2 1022.3a5.2 5.2 0 0 1-7.4 7.4z" fill="#dcdcdc"/><path d="M1809 1032.5l2 1.8 2-1.8z" fill="#fff"/>
<path d="M1825 1022h4.5l1 1.2h7.5v8.3h-13z" fill="#dcdcdc"/>
<rect x="1854.5" y="1021.5" width="11" height="11" fill="none" stroke="#dcdcdc" stroke-width="1"/><path d="M1860 1024v6M1857 1027h6" stroke="#dcdcdc" stroke-width="1.2"/>
<g fill="none" stroke="#9a9a9a" stroke-width="1"><path d="M1880.5 1023.5h11M1884 1023.5v-1.5h4v1.5M1881.5 1024v9h9v-9M1884 1025.5v6M1886 1025.5v6M1888 1025.5v6"/></g></svg><div style="position:absolute;left:0;top:1040px;width:1920px;height:40px;background:linear-gradient(to right,#1a1a21 0px,#1d1c21 150px,#24221f 250px,#2f2b25 360px,#36312a 520px,#38332a 750px,#38332b 1100px,#37322a 1500px,#302c27 1700px,#2b2723 1780px,#1f1d1e 1800px,#1c1b1f 1920px)"></div><svg style="position:absolute;left:0px;top:1040px;" width="270" height="40" viewBox="0 1040 270 40">
<path d="M31 1052h16v10h-9l-3 3v-3h-4z" fill="#f2f2f2"/>
<g stroke="#2a2a2a" stroke-width="1"><path d="M34 1055.5h10M34 1058.5h10"/></g>
<circle cx="31" cy="1067" r="7.6" fill="#26262a" stroke="#9a9a9a" stroke-width="1.1"/>
<text x="27.6" y="1071" font-family="Liberation Sans" font-size="10.5" fill="#f0f0f0">3</text>
<g fill="none" stroke="#e6e6e6" stroke-width="1.1">
<path d="M169.5 1056.5h3l4.5-3.5v13l-4.5-3.5h-3z"/><path d="M179.5 1057c1 1.5 1 3.5 0 5M182 1055c2 2.5 2 6.5 0 9"/>
<path d="M184.5 1053.5c2.8 3.5 2.8 9 0 12.5" stroke="#8a8a8a"/>
<rect x="197.5" y="1056.5" width="11" height="8"/><path d="M200 1067.5h6M203 1064.5v3"/><rect x="193.5" y="1053.5" width="5" height="4.5"/><path d="M196 1058v3h1.5"/>
</g>
<g fill="none" stroke="#f07e1e" stroke-width="2.6"><circle cx="228" cy="1057.5" r="4.6"/><path d="M224.5 1061l-5 5"/></g>
<path d="M245 1063l4.5-4.5 4.5 4.5z" fill="#f0f0f0"/>
</svg><div style="position:absolute;left:81px;top:1046px;font-size:12px;line-height:12px;color:#f4f4f4;font-weight:normal;white-space:nowrap;">22:07</div><div style="position:absolute;left:65px;top:1062px;font-size:12px;line-height:12px;color:#f4f4f4;font-weight:normal;white-space:nowrap;">25/05/2020</div><div style="position:absolute;left:137px;top:1054px;font-size:12px;line-height:12px;color:#f0f0f0;font-weight:normal;white-space:nowrap;direction:rtl;unicode-bidi:bidi-override">&#1506;&#1489;&#1512;</div><div style="position:absolute;left:921px;top:1041px;width:58px;height:38px;background:#5a524b;border:1px solid #9c958f"></div><div style="position:absolute;left:982px;top:1041px;width:58px;height:38px;background:#5a524b;border:1px solid #9c958f"></div><div style="position:absolute;left:1287px;top:1041px;width:58px;height:38px;background:#5a524b;border:1px solid #9c958f"></div><div style="position:absolute;left:1470px;top:1041px;width:58px;height:38px;background:#8e8984;border:1px solid #d8d4d0"></div><div style="position:absolute;left:1714px;top:1041px;width:58px;height:38px;background:#5a524b;border:1px solid #9c958f"></div><div style="position:absolute;left:1119px;top:1045px;width:28px;height:27px;background:#0d1535;border:2px solid #a6e0f5;border-radius:0px"></div><div style="position:absolute;left:1119px;top:1050px;width:28px;text-align:center;font-size:16px;line-height:16px;color:#c2ecfb;letter-spacing:-0.2px;-webkit-text-stroke:0.45px #c2ecfb">Lr</div><div style="position:absolute;left:1180px;top:1045px;width:28px;height:27px;background:#1f0b33;border:2px solid #b48ef0;border-radius:0px"></div><div style="position:absolute;left:1180px;top:1050px;width:28px;text-align:center;font-size:16px;line-height:16px;color:#d9b8ff;letter-spacing:-0.2px;-webkit-text-stroke:0.45px #d9b8ff">Pr</div><div style="position:absolute;left:1302px;top:1045px;width:28px;height:27px;background:#1d1a14;border:2px solid #f5b51c;border-radius:0px"></div><div style="position:absolute;left:1302px;top:1050px;width:28px;text-align:center;font-size:16px;line-height:16px;color:#f8bd2a;letter-spacing:-0.2px;-webkit-text-stroke:0.45px #f8bd2a">Br</div><div style="position:absolute;left:1363px;top:1045px;width:28px;height:27px;background:#1f150d;border:2px solid #f7861e;border-radius:0px"></div><div style="position:absolute;left:1363px;top:1050px;width:28px;text-align:center;font-size:16px;line-height:16px;color:#f99b36;letter-spacing:-0.2px;-webkit-text-stroke:0.45px #f99b36">Ai</div><div style="position:absolute;left:1424px;top:1045px;width:28px;height:27px;background:#0b1a2d;border:2px solid #31a8ff;border-radius:4px"></div><div style="position:absolute;left:1424px;top:1050px;width:28px;text-align:center;font-size:16px;line-height:16px;color:#cdeeff;letter-spacing:-0.2px;-webkit-text-stroke:0.45px #cdeeff">Lr</div><div style="position:absolute;left:1485px;top:1045px;width:28px;height:27px;background:#001e36;border:2px solid #31a8ff;border-radius:4px"></div><div style="position:absolute;left:1485px;top:1050px;width:28px;text-align:center;font-size:16px;line-height:16px;color:#e6f4ff;letter-spacing:-0.2px;-webkit-text-stroke:0.45px #e6f4ff">Ps</div><div style="position:absolute;left:1241px;top:1045px;width:28px;height:27px;background:#151535;border:2px solid #b48ef0"></div><svg style="position:absolute;left:1241px;top:1045px;" width="28" height="27" viewBox="1241 1045 28 27"><path d="M1246 1050v17h17z" fill="#b48ef0"/><g fill="#151535"><rect x="1249" y="1050" width="3" height="3"/><rect x="1252" y="1053" width="3" height="3"/><rect x="1255" y="1056" width="3" height="3"/><rect x="1258" y="1059" width="3" height="3"/><rect x="1261" y="1062" width="3" height="3"/><rect x="1252" y="1050" width="3" height="3" fill="#b48ef0"/><rect x="1255" y="1053" width="3" height="3" fill="#b48ef0"/><rect x="1258" y="1056" width="3" height="3" fill="#b48ef0"/><rect x="1261" y="1059" width="3" height="3" fill="#b48ef0"/></g></svg><svg style="position:absolute;left:900px;top:1040px;" width="1020" height="40" viewBox="900 1040 1020 40">
<path d="M936 1062c-2-7 5-13 14-13 7 0 12 4 12 9 0 4-3 5-6 5-3 0-4 2-3 5 1 3-2 5-6 5-6 0-10-5-11-11z" fill="#e6f0f6" stroke="#5aa6e6" stroke-width="1.3"/>
<circle cx="944.5" cy="1064" r="2.1" fill="#5a524b"/><circle cx="941.5" cy="1058" r="2" fill="#f08030"/><circle cx="946" cy="1054" r="2" fill="#3aa64a"/><circle cx="952" cy="1053" r="2" fill="#f2b82e"/>
<path d="M949.5 1075l11-22" stroke="#f0882a" stroke-width="2.4" stroke-linecap="round"/><path d="M960 1053l3-6 1.5 1-2 6z" fill="#f5c27a"/><circle cx="962.5" cy="1049" r="2.6" fill="#f4c47c"/>
<path d="M1000 1059l6 6" stroke="#185abd" stroke-width="5.5"/><path d="M1004 1066l15-15" stroke="#4a9af2" stroke-width="6"/>
<rect x="1056" y="1044" width="32" height="32" fill="#2b7de0"/>
<path d="M1066.5 1052.5l12.5 8.5" stroke="#fff" stroke-width="1.6"/><rect x="1064" y="1062" width="16" height="5" rx="2" fill="#fff"/><rect x="1066" y="1063.5" width="12" height="1.5" fill="#2b7de0"/>
<rect x="1554" y="1046" width="22" height="28" fill="#2b5fbd"/><rect x="1554" y="1046" width="22" height="7" fill="#41a5ee"/><rect x="1554" y="1053" width="22" height="7" fill="#2b7cd3"/><rect x="1554" y="1060" width="22" height="7" fill="#185abd"/><rect x="1554" y="1067" width="22" height="7" fill="#103f91"/>
<rect x="1544" y="1052" width="16" height="16" fill="#185abd"/><text x="1545.5" y="1065" font-family="Liberation Sans" font-weight="bold" font-size="12" fill="#fff">W</text>
<path d="M1609 1062c0-9 6-15 13.5-15 6.5 0 11.5 4.5 11.5 11.5v2h-18c.5 4 3.5 6.5 8 6.5 3 0 6-1 8.5-2.5v6c-2.5 1.5-6 2.5-9.5 2.5-8 0-14-5-14-11zM1616.5 1056.5h11c-.5-3-2.5-5-5.5-5s-5 2-5.5 5z" fill="#1d86dd"/>
<path d="M1668 1050h9l2 2h17v20h-28z" fill="#e8a630"/><rect x="1668" y="1054" width="28" height="18" fill="#f5c560"/>
<path d="M1673 1072v-7h18v7h-5v-4h-8v4z" fill="#2d8ff0"/>
<path d="M1743 1060L1730.44 1052.75A14.5 14.5 0 0 1 1755.56 1052.75z" fill="#e4762a"/><path d="M1743 1060L1755.56 1052.75A14.5 14.5 0 0 1 1743.00 1074.50z" fill="#f3c133"/><path d="M1743 1060L1743.00 1074.50A14.5 14.5 0 0 1 1730.44 1052.75z" fill="#1da15a"/>
<circle cx="1743" cy="1060" r="6.2" fill="#f0f0f0"/><circle cx="1743" cy="1060" r="4.6" fill="#3b82e8"/>
<g fill="none" stroke="#f2f2f2" stroke-width="1.2"><path d="M1793.5 1052v15M1797.5 1052v2.5h10v-2.5M1797.5 1067v-2.5h10v2.5"/><rect x="1797.5" y="1056.5" width="10" height="6"/></g>
<rect x="1792" y="1056" width="3" height="3" fill="#f2f2f2"/>
<circle cx="1850.5" cy="1057.5" r="5.2" fill="none" stroke="#f2f2f2" stroke-width="1.2"/><path d="M1846.8 1061.2l-6 6" stroke="#f2f2f2" stroke-width="1.2"/>
<path d="M1884 1051l10-1.5v9h-10zM1895.5 1049.3l12.7-1.5v11h-12.7zM1884 1060h10v9.5l-10-1.5zM1895.5 1060h12.7v12l-12.7-1.6z" fill="#ffffff"/>
</svg><div style="position:absolute;left:556px;top:27px;width:3px;height:805px;background:rgba(0,0,0,0.42)"></div><div style="position:absolute;left:364px;top:829px;width:192px;height:3px;background:rgba(0,0,0,0.42)"></div><div style="position:absolute;left:358px;top:20px;width:198px;height:809px;background:#f0f0f0;border-left:1px solid #f8f8f8"></div><div style="position:absolute;left:556px;top:20px;width:1px;height:7px;background:#d6d6d6;"></div><div style="position:absolute;left:359px;top:20px;width:54px;height:1px;background:#393939;"></div><div style="position:absolute;left:361px;top:140px;width:193px;height:19px;background:#0078d7;"></div><div style="position:absolute;left:378px;top:28px;font-size:12px;line-height:12px;color:#000000;font-weight:normal;white-space:nowrap;">Arrange</div><svg style="position:absolute;left:540px;top:27px;" width="12" height="12" viewBox="540 27 12 12"><path d="M544 29v8l4.5-4z" fill="#000"/></svg><div style="position:absolute;left:378px;top:47px;font-size:12px;line-height:12px;color:#000000;font-weight:normal;white-space:nowrap;">Workspace</div><svg style="position:absolute;left:540px;top:46px;" width="12" height="12" viewBox="540 46 12 12"><path d="M544 48v8l4.5-4z" fill="#000"/></svg><div style="position:absolute;left:378px;top:76px;font-size:12px;line-height:12px;color:#000000;font-weight:normal;white-space:nowrap;letter-spacing:-0.22px">Find Extensions on Exchange...</div><div style="position:absolute;left:378px;top:96px;font-size:12px;line-height:12px;color:#000000;font-weight:normal;white-space:nowrap;">Extensions</div><svg style="position:absolute;left:540px;top:95px;" width="12" height="12" viewBox="540 95 12 12"><path d="M544 97v8l4.5-4z" fill="#000"/></svg><div style="position:absolute;left:378px;top:125px;font-size:12px;line-height:12px;color:#000000;font-weight:normal;white-space:nowrap;">3D</div><div style="position:absolute;left:378px;top:144px;font-size:12px;line-height:12px;color:#ffffff;font-weight:normal;white-space:nowrap;">Actions</div><div style="position:absolute;left:440px;width:98px;top:144px;font-size:12px;line-height:12px;color:#ffffff;text-align:right;white-space:nowrap">Alt+F9</div><div style="position:absolute;left:378px;top:163px;font-size:12px;line-height:12px;color:#000000;font-weight:normal;white-space:nowrap;">Adjustments</div><div style="position:absolute;left:378px;top:182px;font-size:12px;line-height:12px;color:#000000;font-weight:normal;white-space:nowrap;">Brush Settings</div><div style="position:absolute;left:440px;width:98px;top:182px;font-size:12px;line-height:12px;color:#000000;text-align:right;white-space:nowrap">F5</div><div style="position:absolute;left:378px;top:201px;font-size:12px;line-height:12px;color:#000000;font-weight:normal;white-space:nowrap;">Brushes</div><div style="position:absolute;left:378px;top:220px;font-size:12px;line-height:12px;color:#000000;font-weight:normal;white-space:nowrap;">Channels</div><div style="position:absolute;left:378px;top:239px;font-size:12px;line-height:12px;color:#000000;font-weight:normal;white-space:nowrap;">Character</div><div style="position:absolute;left:378px;top:258px;font-size:12px;line-height:12px;color:#000000;font-weight:normal;white-space:nowrap;">Character Styles</div><div style="position:absolute;left:378px;top:277px;font-size:12px;line-height:12px;color:#000000;font-weight:normal;white-space:nowrap;">Clone Source</div><div style="position:absolute;left:378px;top:296px;font-size:12px;line-height:12px;color:#000000;font-weight:normal;white-space:nowrap;">Color</div><div style="position:absolute;left:440px;width:98px;top:296px;font-size:12px;line-height:12px;color:#000000;text-align:right;white-space:nowrap">F6</div><div style="position:absolute;left:378px;top:315px;font-size:12px;line-height:12px;color:#000000;font-weight:normal;white-space:nowrap;">Glyphs</div><div style="position:absolute;left:378px;top:334px;font-size:12px;line-height:12px;color:#000000;font-weight:normal;white-space:nowrap;">Gradients</div><div style="position:absolute;left:378px;top:353px;font-size:12px;line-height:12px;color:#000000;font-weight:normal;white-space:nowrap;">Histogram</div><div style="position:absolute;left:378px;top:372px;font-size:12px;line-height:12px;color:#000000;font-weight:normal;white-space:nowrap;">History</div><div style="position:absolute;left:378px;top:391px;font-size:12px;line-height:12px;color:#000000;font-weight:normal;white-space:nowrap;">Info</div><div style="position:absolute;left:440px;width:98px;top:391px;font-size:12px;line-height:12px;color:#000000;text-align:right;white-space:nowrap">F8</div><div style="position:absolute;left:378px;top:410px;font-size:12px;line-height:12px;color:#000000;font-weight:normal;white-space:nowrap;">Layer Comps</div><div style="position:absolute;left:378px;top:429px;font-size:12px;line-height:12px;color:#000000;font-weight:normal;white-space:nowrap;">Layers</div><div style="position:absolute;left:440px;width:98px;top:429px;font-size:12px;line-height:12px;color:#000000;text-align:right;white-space:nowrap">F7</div><svg style="position:absolute;left:362px;top:428px;" width="14" height="14" viewBox="362 428 14 14"><path d="M365 435l2.3 2.6 4.4-5.5" fill="none" stroke="#000" stroke-width="1.7"/></svg><div style="position:absolute;left:378px;top:448px;font-size:12px;line-height:12px;color:#000000;font-weight:normal;white-space:nowrap;">Learn</div><div style="position:absolute;left:378px;top:467px;font-size:12px;line-height:12px;color:#000000;font-weight:normal;white-space:nowrap;">Libraries</div><div style="position:absolute;left:378px;top:486px;font-size:12px;line-height:12px;color:#000000;font-weight:normal;white-space:nowrap;">Measurement Log</div><div style="position:absolute;left:378px;top:505px;font-size:12px;line-height:12px;color:#000000;font-weight:normal;white-space:nowrap;">Modifier Keys</div><div style="position:absolute;left:378px;top:524px;font-size:12px;line-height:12px;color:#000000;font-weight:normal;white-space:nowrap;">Navigator</div><div style="position:absolute;left:378px;top:543px;font-size:12px;line-height:12px;color:#000000;font-weight:normal;white-space:nowrap;">Notes</div><div style="position:absolute;left:378px;top:562px;font-size:12px;line-height:12px;color:#000000;font-weight:normal;white-space:nowrap;">Paragraph</div><div style="position:absolute;left:378px;top:581px;font-size:12px;line-height:12px;color:#000000;font-weight:normal;white-space:nowrap;">Paragraph Styles</div><div style="position:absolute;left:378px;top:600px;font-size:12px;line-height:12px;color:#000000;font-weight:normal;white-space:nowrap;">Paths</div><div style="position:absolute;left:378px;top:619px;font-size:12px;line-height:12px;color:#000000;font-weight:normal;white-space:nowrap;">Patterns</div><div style="position:absolute;left:378px;top:638px;font-size:12px;line-height:12px;color:#000000;font-weight:normal;white-space:nowrap;">Properties</div><svg style="position:absolute;left:362px;top:637px;" width="14" height="14" viewBox="362 637 14 14"><path d="M365 644l2.3 2.6 4.4-5.5" fill="none" stroke="#000" stroke-width="1.7"/></svg><div style="position:absolute;left:378px;top:657px;font-size:12px;line-height:12px;color:#000000;font-weight:normal;white-space:nowrap;">Shapes</div><div style="position:absolute;left:378px;top:676px;font-size:12px;line-height:12px;color:#000000;font-weight:normal;white-space:nowrap;">Styles</div><div style="position:absolute;left:378px;top:695px;font-size:12px;line-height:12px;color:#000000;font-weight:normal;white-space:nowrap;">Swatches</div><div style="position:absolute;left:378px;top:714px;font-size:12px;line-height:12px;color:#000000;font-weight:normal;white-space:nowrap;">Timeline</div><div style="position:absolute;left:378px;top:733px;font-size:12px;line-height:12px;color:#000000;font-weight:normal;white-space:nowrap;">Tool Presets</div><div style="position:absolute;left:378px;top:763px;font-size:12px;line-height:12px;color:#000000;font-weight:normal;white-space:nowrap;">Options</div><svg style="position:absolute;left:362px;top:762px;" width="14" height="14" viewBox="362 762 14 14"><path d="M365 769l2.3 2.6 4.4-5.5" fill="none" stroke="#000" stroke-width="1.7"/></svg><div style="position:absolute;left:378px;top:782px;font-size:12px;line-height:12px;color:#000000;font-weight:normal;white-space:nowrap;">Tools</div><svg style="position:absolute;left:362px;top:781px;" width="14" height="14" viewBox="362 781 14 14"><path d="M365 788l2.3 2.6 4.4-5.5" fill="none" stroke="#000" stroke-width="1.7"/></svg><div style="position:absolute;left:378px;top:812px;font-size:12px;line-height:12px;color:#000000;font-weight:normal;white-space:nowrap;">1 Untitled-1</div><svg style="position:absolute;left:362px;top:811px;" width="14" height="14" viewBox="362 811 14 14"><path d="M365 818l2.3 2.6 4.4-5.5" fill="none" stroke="#000" stroke-width="1.7"/></svg><div style="position:absolute;left:361px;top:66px;width:193px;height:1px;background:#bdbdbd;"></div><div style="position:absolute;left:361px;top:115px;width:193px;height:1px;background:#bdbdbd;"></div><div style="position:absolute;left:361px;top:753px;width:193px;height:1px;background:#bdbdbd;"></div><div style="position:absolute;left:361px;top:802px;width:193px;height:1px;background:#bdbdbd;"></div>
</body></html>
